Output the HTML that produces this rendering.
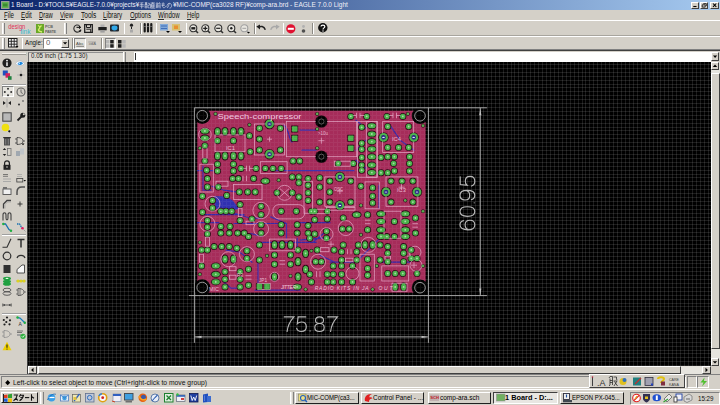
<!DOCTYPE html><html><head><meta charset="utf-8"><style>
*{margin:0;padding:0;box-sizing:border-box}
html,body{width:720px;height:405px;overflow:hidden;background:#d4d0c8;font-family:"Liberation Sans",sans-serif;position:relative}
.a{position:absolute}
.t{position:absolute;white-space:nowrap;transform-origin:0 0;color:#000}
.sk{border-top:1px solid #808080;border-left:1px solid #808080;border-bottom:1px solid #fff;border-right:1px solid #fff}
.rs{border-top:1px solid #fff;border-left:1px solid #fff;border-bottom:1px solid #404040;border-right:1px solid #404040;background:#d4d0c8}
svg{position:absolute;overflow:visible}
</style></head><body>
<div class="a" style="left:0px;top:0px;width:720px;height:10px;background:linear-gradient(90deg,#0a246a,#a6caf0);"></div>
<svg style="left:1px;top:1px" width="9" height="8" viewBox="0 0 9 8"><rect x="0.5" y="0.5" width="7.5" height="7" fill="#62b050" stroke="#9a9a9a"/><rect x="2" y="2.5" width="4.5" height="3" fill="#3c8c30"/></svg>
<div class="t" style="left:10.90px;top:1.27px;font-size:7.6px;line-height:7.6px;color:#f0f0f8;font-weight:normal;transform:scaleX(0.828);">1 Board - D:¥TOOLS¥EAGLE-7.0.0¥projects¥</div>
<svg style="left:139px;top:1.8px" width="34" height="7" viewBox="0 0 34 7"><g fill="none" stroke="#f0f0f8" stroke-width="0.9"><path transform="translate(0.0,0) scale(0.55,0.65)" d="M2 1.5L8 1M1.5 4H8.5M1 6.5H9M5 1.2V9.5L3.8 8.8"/><path transform="translate(5.5,0) scale(0.55,0.65)" d="M0.5 1H5M1 3H4.5V9H1ZM2.3 1V4.5M3.3 1V4.5M1 6.5H4.5M6 2H9V5H6.5V9H9.5"/><path transform="translate(11.0,0) scale(0.55,0.65)" d="M1 1.5H9M5 0.3V3M2.5 3H7.5V8H2.5ZM2.5 5H7.5M2.5 6.5H7.5M1 9.5H9.5M1 3V9.5"/><path transform="translate(16.5,0) scale(0.55,0.65)" d="M2.5 0.3L3.5 2M7.5 0.3L6.5 2M0.5 2.5H9.5M1.5 4H4.5V9.5M1.5 4V9.5M1.5 6H4.5M1.5 7.8H4.5M6.5 4V8M8.5 3.5V9.5L7.5 9"/><path transform="translate(22.0,0) scale(0.55,0.65)" d="M4 0.5L3 7C3 9.5 8 9.5 8.5 6.5M1 3H7M1 5.2H7"/><path transform="translate(27.5,0) scale(0.55,0.65)" d="M5 1.5C4 6 3 9 1.5 8.5C0 7.5 1 2 5 2C8 2 9.5 4 9.3 6C9 8.5 7 9.5 5.5 9.5"/></g></svg>
<div class="t" style="left:172.50px;top:1.27px;font-size:7.6px;line-height:7.6px;color:#f0f0f8;font-weight:normal;transform:scaleX(0.854);">¥MIC-COMP(ca3028 RF)¥comp-ara.brd - EAGLE 7.0.0 Light</div>
<div class="a rs" style="left:690.8px;top:1.5px;width:8.3px;height:7px"></div>
<div class="a rs" style="left:700px;top:1.5px;width:8.3px;height:7px"></div>
<div class="a rs" style="left:710.3px;top:1.5px;width:8.3px;height:7px"></div>
<svg style="left:690.8px;top:1.5px" width="28" height="7" viewBox="0 0 28 7"><path d="M2.3 4.5H5.5" stroke="#000" stroke-width="1.1"/><path d="M12.3 1.6h3v2.4M11.2 2.8h3v2.3h-3z" stroke="#000" stroke-width="0.75" fill="none"/><path d="M22 1.5L25.3 4.8M25.3 1.5L22 4.8" stroke="#000" stroke-width="1.05"/></svg>
<div class="a" style="left:0px;top:10px;width:720px;height:9.5px;background:#d4d0c8;"></div>
<div class="t" style="left:3.60px;top:11.09px;font-size:8.4px;line-height:8.4px;color:#101010;font-weight:normal;transform:scaleX(0.739);">File</div>
<div class="a" style="left:3.6px;top:18.7px;width:3.6px;height:0.7px;background:#303030;"></div>
<div class="t" style="left:21.00px;top:11.09px;font-size:8.4px;line-height:8.4px;color:#101010;font-weight:normal;transform:scaleX(0.746);">Edit</div>
<div class="a" style="left:21px;top:18.7px;width:3.8px;height:0.7px;background:#303030;"></div>
<div class="t" style="left:39.00px;top:11.09px;font-size:8.4px;line-height:8.4px;color:#101010;font-weight:normal;transform:scaleX(0.704);">Draw</div>
<div class="a" style="left:39px;top:18.7px;width:4.2px;height:0.7px;background:#303030;"></div>
<div class="t" style="left:60.40px;top:11.09px;font-size:8.4px;line-height:8.4px;color:#101010;font-weight:normal;transform:scaleX(0.731);">View</div>
<div class="a" style="left:60.4px;top:18.7px;width:4.4px;height:0.7px;background:#303030;"></div>
<div class="t" style="left:80.50px;top:11.09px;font-size:8.4px;line-height:8.4px;color:#101010;font-weight:normal;transform:scaleX(0.780);">Tools</div>
<div class="a" style="left:80.5px;top:18.7px;width:3.8px;height:0.7px;background:#303030;"></div>
<div class="t" style="left:103.30px;top:11.09px;font-size:8.4px;line-height:8.4px;color:#101010;font-weight:normal;transform:scaleX(0.748);">Library</div>
<div class="a" style="left:103.3px;top:18.7px;width:3.4px;height:0.7px;background:#303030;"></div>
<div class="t" style="left:130.00px;top:11.09px;font-size:8.4px;line-height:8.4px;color:#101010;font-weight:normal;transform:scaleX(0.725);">Options</div>
<div class="a" style="left:130px;top:18.7px;width:4.6px;height:0.7px;background:#303030;"></div>
<div class="t" style="left:158.30px;top:11.09px;font-size:8.4px;line-height:8.4px;color:#101010;font-weight:normal;transform:scaleX(0.726);">Window</div>
<div class="a" style="left:158.3px;top:18.7px;width:5.8px;height:0.7px;background:#303030;"></div>
<div class="t" style="left:186.70px;top:11.09px;font-size:8.4px;line-height:8.4px;color:#101010;font-weight:normal;transform:scaleX(0.712);">Help</div>
<div class="a" style="left:186.7px;top:18.7px;width:4.2px;height:0.7px;background:#303030;"></div>
<div class="a" style="left:0px;top:19.5px;width:720px;height:0.8px;background:#a8a59e;"></div>
<div class="a" style="left:0px;top:20.3px;width:720px;height:0.8px;background:#fff;"></div>
<div class="a" style="left:0px;top:34.8px;width:720px;height:0.8px;background:#a8a59e;"></div>
<div class="a" style="left:0px;top:35.6px;width:720px;height:0.8px;background:#fff;"></div>
<div class="a" style="left:2px;top:22.5px;width:1px;height:11px;background:#fff;"></div>
<div class="a" style="left:3px;top:22.5px;width:1.2px;height:11px;background:#e8e6e2;"></div>
<div class="a" style="left:4.2px;top:22.5px;width:1px;height:11px;background:#808080;"></div>
<div class="a" style="left:64px;top:22.5px;width:1px;height:11px;background:#fff;"></div>
<div class="a" style="left:65px;top:22.5px;width:1.2px;height:11px;background:#e8e6e2;"></div>
<div class="a" style="left:66.2px;top:22.5px;width:1px;height:11px;background:#808080;"></div>
<div class="a" style="left:2px;top:37.5px;width:1px;height:11.5px;background:#fff;"></div>
<div class="a" style="left:3px;top:37.5px;width:1.2px;height:11.5px;background:#e8e6e2;"></div>
<div class="a" style="left:4.2px;top:37.5px;width:1px;height:11.5px;background:#808080;"></div>
<div class="a" style="left:123.5px;top:22.5px;width:0.8px;height:11px;background:#8c8a84;"></div>
<div class="a" style="left:124.3px;top:22.5px;width:0.8px;height:11px;background:#fff;"></div>
<div class="a" style="left:140px;top:22.5px;width:0.8px;height:11px;background:#8c8a84;"></div>
<div class="a" style="left:140.8px;top:22.5px;width:0.8px;height:11px;background:#fff;"></div>
<div class="a" style="left:155.6px;top:22.5px;width:0.8px;height:11px;background:#8c8a84;"></div>
<div class="a" style="left:156.4px;top:22.5px;width:0.8px;height:11px;background:#fff;"></div>
<div class="a" style="left:185.6px;top:22.5px;width:0.8px;height:11px;background:#8c8a84;"></div>
<div class="a" style="left:186.4px;top:22.5px;width:0.8px;height:11px;background:#fff;"></div>
<div class="a" style="left:254px;top:22.5px;width:0.8px;height:11px;background:#8c8a84;"></div>
<div class="a" style="left:254.8px;top:22.5px;width:0.8px;height:11px;background:#fff;"></div>
<div class="a" style="left:282.5px;top:22.5px;width:0.8px;height:11px;background:#8c8a84;"></div>
<div class="a" style="left:283.3px;top:22.5px;width:0.8px;height:11px;background:#fff;"></div>
<div class="a" style="left:311.7px;top:22.5px;width:0.8px;height:11px;background:#8c8a84;"></div>
<div class="a" style="left:312.5px;top:22.5px;width:0.8px;height:11px;background:#fff;"></div>
<svg style="left:8px;top:22.5px" width="24" height="12" viewBox="0 0 24 12"><text x="0.3" y="5.8" font-family="Liberation Sans" font-size="6.8" fill="#e03058" textLength="17" lengthAdjust="spacingAndGlyphs">design</text><text x="12.5" y="10.6" font-family="Liberation Sans" font-size="6.5" fill="#38b8d0" textLength="10" lengthAdjust="spacingAndGlyphs">link</text></svg>
<svg style="left:36px;top:24px" width="21" height="10" viewBox="0 0 21 10"><rect x="0" y="0" width="8" height="9" fill="#6aa828"/><path d="M2 1.5Q5 3 3 5T6 8M5.5 1.5L3.5 3.5" stroke="#d8f070" stroke-width="1.3" fill="none"/><text x="9" y="4" font-family="Liberation Sans" font-size="3.8" font-weight="bold" fill="#606060">PCB</text><text x="9" y="8.8" font-family="Liberation Sans" font-size="3.8" font-weight="bold" fill="#606060" textLength="11">PASTE</text></svg>
<svg style="left:72.5px;top:23.5px" width="9" height="9" viewBox="0 0 9 9"><path d="M6.5 1.6A3.6 3.6 0 1 0 7.9 5.5" stroke="#303030" stroke-width="1.1" fill="none"/><path d="M3.5 3.3H7.5M6 2L7.6 3.3L6 4.6" stroke="#000" stroke-width="1" fill="none"/><path d="M5.5 6.5h3l-1.5 1.6z" fill="#000"/></svg>
<svg style="left:84.4px;top:23.5px" width="9" height="9" viewBox="0 0 9 9"><path d="M0.7 0.7H8.3V8.3H0.7Z" fill="none" stroke="#202020" stroke-width="1.3"/><path d="M2.5 0.7V3.5H6.5V0.7M2.3 5.2H6.7V8.3" fill="none" stroke="#202020" stroke-width="1"/></svg>
<svg style="left:97.5px;top:23.5px" width="9" height="9" viewBox="0 0 9 9"><rect x="2.5" y="0.5" width="4" height="2.5" fill="#b0b0b0"/><rect x="0.3" y="3" width="8.4" height="3.3" fill="#202020"/><rect x="2.3" y="6.3" width="4.4" height="2.3" fill="#a0a0a0"/></svg>
<svg style="left:110px;top:24px" width="9" height="8" viewBox="0 0 9 8"><rect x="0" y="0.5" width="9" height="7" rx="1" fill="#202830"/><ellipse cx="4.5" cy="4" rx="3" ry="2.4" fill="#30a8e8"/></svg>
<svg style="left:128.75px;top:23px" width="5" height="10" viewBox="0 0 5 10"><circle cx="2.5" cy="2.2" r="1.6" fill="#202020"/><path d="M2.5 4V6" stroke="#202020" stroke-width="1"/><rect x="1" y="6.5" width="3" height="3" fill="#a8a8a8"/></svg>
<svg style="left:142.5px;top:23px" width="10" height="9.5" viewBox="0 0 10 9.5"><path d="M1.7 1V8.5M5 1V8.5M8.3 1V8.5" stroke="#181818" stroke-width="2.2" stroke-linecap="round"/><path d="M0.5 3.5H2.9M3.8 3.5H6.2M7.1 3.5H9.5" stroke="#909090" stroke-width="0.6"/></svg>
<svg style="left:160px;top:24px" width="10" height="9" viewBox="0 0 10 9"><rect x="0" y="0" width="8" height="6.5" fill="#80a8d8"/><path d="M1 2H7M1 4.5H7" stroke="#3060b0" stroke-width="0.8"/><path d="M6 7h4l-2 2z" fill="#000"/></svg>
<svg style="left:172px;top:24px" width="10" height="9" viewBox="0 0 10 9"><rect x="0" y="0" width="8" height="6.5" fill="#d8c070"/><rect x="2" y="1.5" width="4" height="3.5" fill="#e89030"/><path d="M6 7h4l-2 2z" fill="#000"/></svg>
<svg style="left:188.75px;top:23.5px" width="10" height="10" viewBox="0 0 10 10"><circle cx="4.3" cy="4.3" r="3.5" fill="#e8e6e0" stroke="#303030" stroke-width="1.1"/><path d="M6.8 6.8L9 9" stroke="#303030" stroke-width="1.6"/><rect x="2.3" y="3.1" width="4" height="2.4" fill="#202020"/></svg>
<svg style="left:201px;top:23.5px" width="10" height="10" viewBox="0 0 10 10"><circle cx="4.3" cy="4.3" r="3.5" fill="#e8e6e0" stroke="#303030" stroke-width="1.1"/><path d="M6.8 6.8L9 9" stroke="#303030" stroke-width="1.6"/><path d="M2.2 4.3H6.4M4.3 2.2V6.4" stroke="#202020" stroke-width="1.2"/></svg>
<svg style="left:214px;top:23.5px" width="10" height="10" viewBox="0 0 10 10"><circle cx="4.3" cy="4.3" r="3.5" fill="#e8e6e0" stroke="#303030" stroke-width="1.1"/><path d="M6.8 6.8L9 9" stroke="#303030" stroke-width="1.6"/><path d="M2.2 4.3H6.4" stroke="#202020" stroke-width="1.2"/></svg>
<svg style="left:226.7px;top:23.5px" width="10" height="10" viewBox="0 0 10 10"><circle cx="4.3" cy="4.3" r="3.5" fill="#e8e6e0" stroke="#303030" stroke-width="1.1"/><path d="M6.8 6.8L9 9" stroke="#303030" stroke-width="1.6"/><circle cx="4.3" cy="4.3" r="1.2" fill="#202020"/></svg>
<svg style="left:240px;top:23.5px" width="10" height="10" viewBox="0 0 10 10"><circle cx="4.3" cy="4.3" r="3.5" fill="#e8e6e0" stroke="#a0a0a0" stroke-width="1.1"/><path d="M6.8 6.8L9 9" stroke="#a0a0a0" stroke-width="1.6"/><path d="M2.4 4.3H6.2" stroke="#a0a0a0" stroke-width="1"/><path d="M7 8h3l-1.5 1.6z" fill="#000"/></svg>
<svg style="left:256px;top:24px" width="10" height="8" viewBox="0 0 10 8"><path d="M2.5 3.5C4.5 1.8 8 2 9.3 5.8" stroke="#202020" stroke-width="1.5" fill="none"/><path d="M0.3 2.5L4 0.5L4 5.5Z" fill="#202020"/></svg>
<svg style="left:270px;top:24px" width="10" height="8" viewBox="0 0 10 8"><path d="M7.5 3.5C5.5 1.8 2 2 0.7 5.8" stroke="#a8a8a8" stroke-width="1.5" fill="none"/><path d="M9.7 2.5L6 0.5L6 5.5Z" fill="#a8a8a8"/></svg>
<svg style="left:286px;top:23.5px" width="10" height="10" viewBox="0 0 10 10"><circle cx="4.8" cy="4.8" r="4.6" fill="#e01030"/><rect x="1.8" y="3.8" width="6" height="2" fill="#fff"/></svg>
<svg style="left:301px;top:23.5px" width="5" height="10" viewBox="0 0 5 10"><circle cx="2.5" cy="2.5" r="1.4" fill="#b0b0b0"/><circle cx="2.5" cy="7" r="1.8" fill="#505050"/></svg>
<svg style="left:318px;top:23.3px" width="10" height="10" viewBox="0 0 10 10"><circle cx="4.8" cy="4.8" r="4.7" fill="#101010"/><path d="M3 3.6C3 1.6 6.8 1.6 6.8 3.6C6.8 5 5 4.8 5 6.5" stroke="#fff" stroke-width="1.2" fill="none"/><circle cx="5" cy="8" r="0.7" fill="#fff"/></svg>
<div class="a" style="left:0px;top:49.4px;width:720px;height:0.9px;background:#808080;"></div>
<div class="a" style="left:0px;top:50.3px;width:720px;height:0.9px;background:#404040;"></div>
<svg style="left:8px;top:38.3px" width="10.5" height="10" viewBox="0 0 10.5 10"><rect x="0.5" y="0.5" width="8.5" height="8.5" fill="#f0f0f0" stroke="#202020" stroke-width="1"/><path d="M3.3 0.5V9M6.2 0.5V9M0.5 3.3H9M0.5 6.2H9" stroke="#202020" stroke-width="0.9"/><path d="M7.5 8h3l-1.5 1.8z" fill="#000"/></svg>
<div class="a" style="left:21.6px;top:37.5px;width:0.8px;height:11px;background:#8c8a84;"></div>
<div class="a" style="left:22.400000000000002px;top:37.5px;width:0.8px;height:11px;background:#fff;"></div>
<div class="t" style="left:25.00px;top:39.43px;font-size:8px;line-height:8px;color:#101010;font-weight:normal;transform:scaleX(0.776);">Angle:</div>
<div class="a sk" style="left:43px;top:38px;width:26.4px;height:10.5px;background:#fff;border-top-color:#808080;border-left-color:#808080"></div>
<div class="t" style="left:45.50px;top:39.43px;font-size:8px;line-height:8px;color:#606060;font-weight:normal;transform:scaleX(0.966);">0</div>
<div class="a rs" style="left:60.5px;top:39px;width:8px;height:8.5px"></div>
<svg style="left:60.5px;top:39px" width="8" height="8.5" viewBox="0 0 8 8.5"><path d="M2 3.2h4.2l-2.1 2.4z" fill="#000"/></svg>
<div class="a" style="left:72px;top:37.5px;width:0.8px;height:11px;background:#8c8a84;"></div>
<div class="a" style="left:72.8px;top:37.5px;width:0.8px;height:11px;background:#fff;"></div>
<div class="a" style="left:74.4px;top:38px;width:11.2px;height:10.5px;background:#e6e4de;border-top:1px solid #808080;border-left:1px solid #808080;border-bottom:1px solid #fff;border-right:1px solid #fff"></div>
<svg style="left:76px;top:40.5px" width="9" height="6" viewBox="0 0 9 6"><text x="0" y="4.2" font-family="Liberation Sans" font-size="4.2" fill="#404040" textLength="7.5">Abc</text><path d="M0.3 5.3H8" stroke="#505050" stroke-width="0.7"/></svg>
<svg style="left:88px;top:40.5px" width="9" height="6" viewBox="0 0 9 6"><text x="0" y="4.2" font-family="Liberation Sans" font-size="4.2" fill="#606060" textLength="7.5" transform="scale(-1,1) translate(-8,0)">Abc</text><path d="M0.3 1H8" stroke="#909090" stroke-width="0.7"/></svg>
<div class="a" style="left:101px;top:37.5px;width:0.8px;height:11px;background:#8c8a84;"></div>
<div class="a" style="left:101.8px;top:37.5px;width:0.8px;height:11px;background:#fff;"></div>
<div class="a" style="left:104.5px;top:38px;width:11px;height:10.5px;background:#e6e4de;border-top:1px solid #808080;border-left:1px solid #808080;border-bottom:1px solid #fff;border-right:1px solid #fff"></div>
<svg style="left:106px;top:39.5px" width="8" height="8" viewBox="0 0 8 8"><rect x="0" y="0" width="3.5" height="3.5" fill="#b8b8b8"/><rect x="4.2" y="0" width="3.5" height="3.5" fill="#202020"/><rect x="0" y="4.2" width="3.5" height="3.5" fill="#b8b8b8"/><rect x="4.2" y="4.2" width="3.5" height="3.5" fill="#202020"/></svg>
<svg style="left:117.5px;top:39.5px" width="8" height="8" viewBox="0 0 8 8"><rect x="0" y="0" width="3.5" height="3.5" fill="#202020"/><rect x="4.2" y="0" width="3.5" height="3.5" fill="#b8b8b8"/><rect x="0" y="4.2" width="3.5" height="3.5" fill="#202020"/><rect x="4.2" y="4.2" width="3.5" height="3.5" fill="#b8b8b8"/></svg>
<div class="a" style="left:2.2px;top:52.5px;width:23.8px;height:0.9px;background:#9c9a94;"></div>
<div class="a" style="left:2.2px;top:53.4px;width:23.8px;height:0.9px;background:#f4f2ee;"></div>
<div class="a" style="left:2.2px;top:54.3px;width:23.8px;height:0.9px;background:#9c9a94;"></div>
<div class="a" style="left:25.5px;top:52px;width:1px;height:3.5px;background:#c0c8c0;"></div>
<div class="a" style="left:28px;top:51.5px;width:95.5px;height:10.5px;background:#dcd9d2;border-left:1px solid #707070;border-top:1px solid #909090"></div>
<div class="t" style="left:30.80px;top:52.21px;font-size:7.9px;line-height:7.9px;color:#202020;font-weight:normal;transform:scaleX(0.780);">0.05 inch (1.75 1.30)</div>
<div class="a" style="left:123.3px;top:51.5px;width:1px;height:10.5px;background:#fff;"></div>
<div class="a" style="left:125px;top:51.5px;width:8.5px;height:10.5px;background:#d4d0c8;border-left:1px solid #808080"></div>
<div class="a" style="left:133.6px;top:51.5px;width:577.4px;height:10.5px;background:#fff;"></div>
<div class="a" style="left:134.8px;top:53.3px;width:0.9px;height:6.5px;background:#303030;"></div>
<div class="a rs" style="left:711px;top:51.7px;width:8px;height:9px"></div>
<svg style="left:711px;top:51.7px" width="8" height="9" viewBox="0 0 8 9"><path d="M2 3.6h4.2l-2.1 2.4z" fill="#000"/></svg>
<div class="a" style="left:26.8px;top:61.5px;width:1.2px;height:313px;background:#404040;"></div>
<svg style="left:2.4000000000000004px;top:58.3px" width="10" height="10" viewBox="0 0 10 10"><circle cx="5" cy="5" r="4.6" fill="#202020"/><circle cx="5" cy="2.6" r="0.9" fill="#fff"/><path d="M5 4.2V8" stroke="#fff" stroke-width="1.4"/></svg>
<svg style="left:15.3px;top:58.0px" width="10" height="10" viewBox="0 0 10 10"><path d="M0.5 5.5C2.5 2 7.5 2 9.5 5.5C7.5 8.5 2.5 8.5 0.5 5.5Z" fill="#f4f8fc" stroke="#b0b8c0" stroke-width="0.7"/><path d="M2.5 6C3.5 3.8 6.8 3.5 8 5.2C7 7.2 4 7.6 2.5 6Z" fill="#1a88e0"/><circle cx="4.3" cy="5.3" r="0.7" fill="#d8f0ff"/></svg>
<svg style="left:2.4000000000000004px;top:70.2px" width="10" height="10" viewBox="0 0 10 10"><rect x="0.8" y="0.5" width="5" height="5" fill="#2050c0"/><rect x="3.5" y="3.2" width="4.5" height="4.5" fill="#d02060"/><rect x="6" y="6.2" width="3.6" height="3.6" fill="#208040"/></svg>
<svg style="left:15.7px;top:70.2px" width="10" height="10" viewBox="0 0 10 10"><path d="M5 0.5V9.5M1 5H9" stroke="#b0b0b0" stroke-width="0.8"/><circle cx="5" cy="5" r="1.3" fill="#202020"/></svg>
<div class="a" style="left:2px;top:84.2px;width:24px;height:0.8px;background:#a0a0a0;"></div>
<div class="a" style="left:2px;top:85px;width:24px;height:0.8px;background:#fff;"></div>
<div class="a" style="left:2px;top:86.3px;width:12px;height:11.2px;background:#e6e4de;border-top:1px solid #808080;border-left:1px solid #808080;border-bottom:1px solid #fff;border-right:1px solid #fff"></div>
<svg style="left:3.0px;top:87.0px" width="10" height="10" viewBox="0 0 10 10"><circle cx="5" cy="1.8" r="1" fill="#303030"/><circle cx="5" cy="8.2" r="1" fill="#303030"/><circle cx="1.8" cy="5" r="1" fill="#303030"/><circle cx="8.2" cy="5" r="1" fill="#303030"/></svg>
<svg style="left:15.7px;top:86.5px" width="10" height="10" viewBox="0 0 10 10"><circle cx="5" cy="5" r="4" fill="none" stroke="#606060" stroke-width="1.1"/><path d="M5 2.5V5.5L6.8 6.5" stroke="#606060" stroke-width="0.9" fill="none"/></svg>
<svg style="left:2.4000000000000004px;top:98.3px" width="10" height="10" viewBox="0 0 10 10"><path d="M5 0.5V9.5" stroke="#909090" stroke-width="0.7"/><path d="M1 3L3.8 5L1 7Z M9 3L6.2 5L9 7Z" fill="#202020"/></svg>
<svg style="left:15.7px;top:98.3px" width="10" height="10" viewBox="0 0 10 10"><circle cx="3" cy="6.5" r="1" fill="#303030"/><circle cx="7" cy="3" r="0.9" fill="#707070"/></svg>
<svg style="left:1.9000000000000004px;top:111.8px" width="10" height="10" viewBox="0 0 10 10"><rect x="0.8" y="0.8" width="8.4" height="8.4" fill="#b8b8b8" stroke="#404040" stroke-width="1"/></svg>
<svg style="left:15.7px;top:111.8px" width="10" height="10" viewBox="0 0 10 10"><path d="M1.5 8.5L6 4" stroke="#202020" stroke-width="1.8"/><circle cx="6.8" cy="3.2" r="2.5" fill="#202020"/><circle cx="7.8" cy="2.2" r="1" fill="#d4d0c8"/></svg>
<svg style="left:1.0px;top:122.8px" width="10" height="10" viewBox="0 0 10 10"><circle cx="4.5" cy="4.5" r="3.8" fill="#f0e010"/><circle cx="8.3" cy="8.3" r="1.1" fill="#101010"/></svg>
<svg style="left:2.0px;top:135.5px" width="10" height="10" viewBox="0 0 10 10"><rect x="2" y="2" width="6" height="7.5" fill="#505050"/><rect x="1.2" y="1" width="7.6" height="1.2" fill="#303030"/><path d="M3.7 3V8.5M6.3 3V8.5" stroke="#a0a0a0" stroke-width="0.6"/></svg>
<svg style="left:15.3px;top:135.5px" width="10" height="10" viewBox="0 0 10 10"><path d="M2 1.5V8.5M2 1.5C6 1.5 8 3 8 5C8 7 6 8.5 2 8.5" stroke="#404040" stroke-width="0.9" fill="none"/><path d="M0 3H2M0 7H2M8 5H10" stroke="#404040" stroke-width="0.8"/><path d="M6.5 7.5h3l-1.5 1.8z" fill="#000"/></svg>
<svg style="left:2.0px;top:147.4px" width="10" height="10" viewBox="0 0 10 10"><path d="M2.5 1L0.8 3H4.2Z M2.5 9L0.8 7H4.2Z" fill="#202020"/><rect x="5.5" y="1.5" width="3.5" height="7" fill="none" stroke="#707070" stroke-width="0.8"/></svg>
<svg style="left:15.3px;top:147.4px" width="10" height="10" viewBox="0 0 10 10"><rect x="1" y="4" width="4" height="5" fill="#a0a8b0"/><rect x="5" y="1.5" width="4" height="6" fill="#c0c4c8"/></svg>
<svg style="left:2.0px;top:160.2px" width="10" height="10" viewBox="0 0 10 10"><path d="M2.6 5V3.3C2.6 1.7 3.6 0.9 5 0.9C6.4 0.9 7.4 1.7 7.4 3.3V5" stroke="#202020" stroke-width="1.2" fill="none"/><rect x="1.5" y="4.8" width="7" height="5" fill="#202020"/><circle cx="5" cy="7" r="0.8" fill="#d4d0c8"/></svg>
<svg style="left:2.0px;top:172.5px" width="10" height="10" viewBox="0 0 10 10"><path d="M1 1.5H6M1 3.3H6" stroke="#505050" stroke-width="0.7"/><path d="M1 6H9M1 8.5H9" stroke="#a0a0a0" stroke-width="0.8"/></svg>
<svg style="left:15.5px;top:172.5px" width="10" height="10" viewBox="0 0 10 10"><path d="M1 1.5H6M1 3.5H6" stroke="#a0a0a0" stroke-width="0.7"/><rect x="0.8" y="5.5" width="6" height="3.5" fill="none" stroke="#404040" stroke-width="0.8"/><path d="M7.5 7h2.5l-1.2 1.6z" fill="#000"/></svg>
<svg style="left:2.0px;top:185.75px" width="10" height="10" viewBox="0 0 10 10"><rect x="1" y="3" width="8" height="5.5" fill="#f0f0f0" stroke="#505050" stroke-width="0.9"/><rect x="1" y="1" width="4" height="2" fill="#707070"/></svg>
<svg style="left:15.5px;top:185.75px" width="10" height="10" viewBox="0 0 10 10"><path d="M1 9V6C1 3 3 1 6 1H9" stroke="#505050" stroke-width="1.5" fill="none"/></svg>
<svg style="left:2.0px;top:198.6px" width="10" height="10" viewBox="0 0 10 10"><path d="M1.5 9.5V5L5 1.5H9" stroke="#404040" stroke-width="1.3" fill="none"/><path d="M3 9.5V5.5L5.5 3H9" stroke="#a0a0a0" stroke-width="0.7" fill="none"/></svg>
<svg style="left:15.0px;top:198.6px" width="10" height="10" viewBox="0 0 10 10"><path d="M2.5 5H7.5M5 2.5V7.5" stroke="#303030" stroke-width="0.9"/></svg>
<svg style="left:2.0px;top:210.5px" width="10" height="10" viewBox="0 0 10 10"><path d="M1 9.5V4C1 1 4 1 4 4V7C4 9.5 6 9.5 6 7V4C6 1 9 1 9 4V9.5" stroke="#404040" stroke-width="1.1" fill="none"/></svg>
<svg style="left:2.0px;top:222.3px" width="10" height="10" viewBox="0 0 10 10"><path d="M1 2H3.5L7 7.5L9.5 9" stroke="#1870b0" stroke-width="1.3" fill="none"/><circle cx="1.3" cy="2" r="1.2" fill="#20b040"/><circle cx="9" cy="8.8" r="1.2" fill="#20b040"/></svg>
<svg style="left:15.5px;top:222.3px" width="10" height="10" viewBox="0 0 10 10"><path d="M1 2H3.5L6 6" stroke="#1870b0" stroke-width="1.3" fill="none" stroke-dasharray="1.5 0.7"/><circle cx="6.5" cy="6.3" r="1.3" fill="#e02060"/><path d="M7.5 7.5L9.5 9.5" stroke="#a0a0a0" stroke-width="1"/></svg>
<div class="a" style="left:2px;top:234px;width:24px;height:0.8px;background:#a0a0a0;"></div>
<div class="a" style="left:2px;top:234.8px;width:24px;height:0.8px;background:#fff;"></div>
<svg style="left:2.0px;top:238.0px" width="10" height="10" viewBox="0 0 10 10"><path d="M0.5 9.2H5L9 0.8" stroke="#303030" stroke-width="1.1" fill="none"/></svg>
<svg style="left:15.5px;top:238.0px" width="10" height="10" viewBox="0 0 10 10"><path d="M1.5 1.5H8.5M5 1.5V9.5" stroke="#303030" stroke-width="1.5" fill="none"/></svg>
<svg style="left:2.0px;top:250.8px" width="10" height="10" viewBox="0 0 10 10"><circle cx="5" cy="5" r="3.8" fill="none" stroke="#303030" stroke-width="1.2"/></svg>
<svg style="left:15.5px;top:250.8px" width="10" height="10" viewBox="0 0 10 10"><path d="M1 7C2 3.5 8 3.5 9 7" stroke="#303030" stroke-width="1.2" fill="none"/></svg>
<svg style="left:2.0px;top:263.6px" width="10" height="10" viewBox="0 0 10 10"><rect x="1.5" y="1" width="7" height="8" fill="#303030"/></svg>
<svg style="left:15.5px;top:263.6px" width="10" height="10" viewBox="0 0 10 10"><path d="M1 9H8.5V1H6L1 5.5Z" fill="#f8f8f8" stroke="#404040" stroke-width="0.9"/></svg>
<svg style="left:2.0px;top:275.5px" width="10" height="10" viewBox="0 0 10 10"><ellipse cx="5" cy="2.6" rx="4" ry="1.8" fill="#20a040"/><ellipse cx="5" cy="5.5" rx="4" ry="1.8" fill="#20a040"/><ellipse cx="5" cy="8" rx="4" ry="1.8" fill="#20a040"/><ellipse cx="5" cy="2.4" rx="1.5" ry="0.7" fill="#e0ffe0"/></svg>
<svg style="left:15.5px;top:275.5px" width="10" height="10" viewBox="0 0 10 10"><path d="M0.5 5H9.5" stroke="#60b040" stroke-width="1"/><circle cx="2" cy="5" r="1.5" fill="#e0d020"/><circle cx="5" cy="5" r="1.5" fill="#e0d020"/><circle cx="8" cy="5" r="1.5" fill="#e0d020"/></svg>
<svg style="left:2.0px;top:287.4px" width="10" height="10" viewBox="0 0 10 10"><ellipse cx="5" cy="3" rx="4" ry="1.8" fill="none" stroke="#505050" stroke-width="0.9"/><ellipse cx="5" cy="6.5" rx="4" ry="1.8" fill="none" stroke="#505050" stroke-width="0.9"/></svg>
<svg style="left:15.5px;top:287.4px" width="10" height="10" viewBox="0 0 10 10"><path d="M2 1.5V8.5M2 1.5C6 1.5 8 3 8 5C8 7 6 8.5 2 8.5" stroke="#505050" stroke-width="0.9" fill="none"/><path d="M0 3H2M0 7H2M8 5H10M4 1V9" stroke="#505050" stroke-width="0.7"/></svg>
<svg style="left:2.0px;top:300.0px" width="10" height="10" viewBox="0 0 10 10"><path d="M0.8 3.5V6.5M9.2 3.5V6.5M1 5H9" stroke="#404040" stroke-width="0.8"/><path d="M1 5L3 4V6Z M9 5L7 4V6Z" fill="#404040"/></svg>
<div class="a" style="left:2px;top:312.8px;width:24px;height:0.8px;background:#a0a0a0;"></div>
<div class="a" style="left:2px;top:313.6px;width:24px;height:0.8px;background:#fff;"></div>
<svg style="left:2.0px;top:315.75px" width="10" height="10" viewBox="0 0 10 10"><circle cx="5" cy="1.5" r="1.1" fill="#202020"/><circle cx="1.8" cy="4" r="1.1" fill="#202020"/><circle cx="8" cy="4.3" r="1.1" fill="#202020"/><circle cx="4.3" cy="6" r="1.1" fill="#202020"/><circle cx="2.5" cy="8.5" r="1.1" fill="#202020"/><circle cx="7.5" cy="8.3" r="1.1" fill="#202020"/></svg>
<svg style="left:15.5px;top:315.75px" width="10" height="10" viewBox="0 0 10 10"><path d="M1.5 1.5L4 2L8.5 6.5" stroke="#1880c0" stroke-width="1.3" fill="none"/><circle cx="1.5" cy="1.5" r="1.2" fill="#20b040"/><circle cx="8.8" cy="6.8" r="1.2" fill="#20b040"/><text x="2.5" y="9.8" font-family="Liberation Sans" font-size="5" fill="#303030">A</text></svg>
<svg style="left:2.0px;top:328.6px" width="10" height="10" viewBox="0 0 10 10"><path d="M2 1.5V8.5M2 1.5C6 1.5 8 3 8 5C8 7 6 8.5 2 8.5" stroke="#909090" stroke-width="0.9" fill="none"/><path d="M0 3H2M0 7H2M8 5H10" stroke="#909090" stroke-width="0.8"/></svg>
<svg style="left:15.5px;top:328.6px" width="10" height="10" viewBox="0 0 10 10"><path d="M1 2H7M1 3.5H6" stroke="#606060" stroke-width="0.8"/><rect x="1" y="5" width="4" height="2" fill="#a0a0a0"/><circle cx="7" cy="7.3" r="2.6" fill="#30b040"/><path d="M5.8 7.3L6.8 8.3L8.3 6.3" stroke="#fff" stroke-width="0.8" fill="none"/></svg>
<svg style="left:1.5px;top:341.4px" width="10" height="10" viewBox="0 0 10 10"><path d="M5 0.8L9.5 9.3H0.5Z" fill="#f0d000"/><path d="M5 3.5V6.8" stroke="#202020" stroke-width="1.1"/><circle cx="5" cy="8" r="0.6" fill="#202020"/></svg>
<svg style="left:28px;top:61.8px" width="683" height="304.5" viewBox="28 61.8 683 304.5"><defs><clipPath id="bc"><rect x="197" y="110" width="229" height="183"/></clipPath></defs><rect x="28" y="61.8" width="683" height="304.5" fill="#000"/><path d="M29.5 61.8V366.3M33.5 61.8V366.3M37.5 61.8V366.3M41.5 61.8V366.3M45.5 61.8V366.3M49.5 61.8V366.3M53.5 61.8V366.3M57.5 61.8V366.3M61.5 61.8V366.3M65.5 61.8V366.3M69.5 61.8V366.3M73.5 61.8V366.3M76.5 61.8V366.3M80.5 61.8V366.3M84.5 61.8V366.3M88.5 61.8V366.3M92.5 61.8V366.3M96.5 61.8V366.3M100.5 61.8V366.3M104.5 61.8V366.3M108.5 61.8V366.3M112.5 61.8V366.3M116.5 61.8V366.3M120.5 61.8V366.3M124.5 61.8V366.3M128.5 61.8V366.3M132.5 61.8V366.3M136.5 61.8V366.3M140.5 61.8V366.3M144.5 61.8V366.3M147.5 61.8V366.3M151.5 61.8V366.3M155.5 61.8V366.3M159.5 61.8V366.3M163.5 61.8V366.3M167.5 61.8V366.3M171.5 61.8V366.3M175.5 61.8V366.3M179.5 61.8V366.3M183.5 61.8V366.3M187.5 61.8V366.3M191.5 61.8V366.3M195.5 61.8V366.3M199.5 61.8V366.3M203.5 61.8V366.3M207.5 61.8V366.3M211.5 61.8V366.3M215.5 61.8V366.3M219.5 61.8V366.3M222.5 61.8V366.3M226.5 61.8V366.3M230.5 61.8V366.3M234.5 61.8V366.3M238.5 61.8V366.3M242.5 61.8V366.3M246.5 61.8V366.3M250.5 61.8V366.3M254.5 61.8V366.3M258.5 61.8V366.3M262.5 61.8V366.3M266.5 61.8V366.3M270.5 61.8V366.3M274.5 61.8V366.3M278.5 61.8V366.3M282.5 61.8V366.3M286.5 61.8V366.3M290.5 61.8V366.3M293.5 61.8V366.3M297.5 61.8V366.3M301.5 61.8V366.3M305.5 61.8V366.3M309.5 61.8V366.3M313.5 61.8V366.3M317.5 61.8V366.3M321.5 61.8V366.3M325.5 61.8V366.3M329.5 61.8V366.3M333.5 61.8V366.3M337.5 61.8V366.3M341.5 61.8V366.3M345.5 61.8V366.3M349.5 61.8V366.3M353.5 61.8V366.3M357.5 61.8V366.3M361.5 61.8V366.3M365.5 61.8V366.3M368.5 61.8V366.3M372.5 61.8V366.3M376.5 61.8V366.3M380.5 61.8V366.3M384.5 61.8V366.3M388.5 61.8V366.3M392.5 61.8V366.3M396.5 61.8V366.3M400.5 61.8V366.3M404.5 61.8V366.3M408.5 61.8V366.3M412.5 61.8V366.3M416.5 61.8V366.3M420.5 61.8V366.3M424.5 61.8V366.3M428.5 61.8V366.3M432.5 61.8V366.3M436.5 61.8V366.3M439.5 61.8V366.3M443.5 61.8V366.3M447.5 61.8V366.3M451.5 61.8V366.3M455.5 61.8V366.3M459.5 61.8V366.3M463.5 61.8V366.3M467.5 61.8V366.3M471.5 61.8V366.3M475.5 61.8V366.3M479.5 61.8V366.3M483.5 61.8V366.3M487.5 61.8V366.3M491.5 61.8V366.3M495.5 61.8V366.3M499.5 61.8V366.3M503.5 61.8V366.3M507.5 61.8V366.3M511.5 61.8V366.3M514.5 61.8V366.3M518.5 61.8V366.3M522.5 61.8V366.3M526.5 61.8V366.3M530.5 61.8V366.3M534.5 61.8V366.3M538.5 61.8V366.3M542.5 61.8V366.3M546.5 61.8V366.3M550.5 61.8V366.3M554.5 61.8V366.3M558.5 61.8V366.3M562.5 61.8V366.3M566.5 61.8V366.3M570.5 61.8V366.3M574.5 61.8V366.3M578.5 61.8V366.3M582.5 61.8V366.3M585.5 61.8V366.3M589.5 61.8V366.3M593.5 61.8V366.3M597.5 61.8V366.3M601.5 61.8V366.3M605.5 61.8V366.3M609.5 61.8V366.3M613.5 61.8V366.3M617.5 61.8V366.3M621.5 61.8V366.3M625.5 61.8V366.3M629.5 61.8V366.3M633.5 61.8V366.3M637.5 61.8V366.3M641.5 61.8V366.3M645.5 61.8V366.3M649.5 61.8V366.3M653.5 61.8V366.3M657.5 61.8V366.3M660.5 61.8V366.3M664.5 61.8V366.3M668.5 61.8V366.3M672.5 61.8V366.3M676.5 61.8V366.3M680.5 61.8V366.3M684.5 61.8V366.3M688.5 61.8V366.3M692.5 61.8V366.3M696.5 61.8V366.3M700.5 61.8V366.3M704.5 61.8V366.3M708.5 61.8V366.3" stroke="#fff" stroke-opacity="0.11" stroke-width="1" fill="none" shape-rendering="crispEdges"/><path d="M28 64.5H711M28 68.5H711M28 72.5H711M28 76.5H711M28 80.5H711M28 84.5H711M28 87.5H711M28 91.5H711M28 95.5H711M28 99.5H711M28 103.5H711M28 107.5H711M28 111.5H711M28 115.5H711M28 119.5H711M28 123.5H711M28 127.5H711M28 130.5H711M28 134.5H711M28 138.5H711M28 142.5H711M28 146.5H711M28 150.5H711M28 154.5H711M28 158.5H711M28 162.5H711M28 166.5H711M28 170.5H711M28 174.5H711M28 177.5H711M28 181.5H711M28 185.5H711M28 189.5H711M28 193.5H711M28 197.5H711M28 201.5H711M28 205.5H711M28 209.5H711M28 213.5H711M28 217.5H711M28 220.5H711M28 224.5H711M28 228.5H711M28 232.5H711M28 236.5H711M28 240.5H711M28 244.5H711M28 248.5H711M28 252.5H711M28 256.5H711M28 260.5H711M28 263.5H711M28 267.5H711M28 271.5H711M28 275.5H711M28 279.5H711M28 283.5H711M28 287.5H711M28 291.5H711M28 295.5H711M28 299.5H711M28 303.5H711M28 306.5H711M28 310.5H711M28 314.5H711M28 318.5H711M28 322.5H711M28 326.5H711M28 330.5H711M28 334.5H711M28 338.5H711M28 342.5H711M28 346.5H711M28 350.5H711M28 353.5H711M28 357.5H711M28 361.5H711M28 365.5H711" stroke="#fff" stroke-opacity="0.11" stroke-width="1" fill="none" shape-rendering="crispEdges"/><rect x="197.3" y="110.5" width="228.3" height="181.9" fill="#a62c5a"/><circle cx="202.2" cy="115.5" r="8.3" fill="#000"/><circle cx="420" cy="115.6" r="8.3" fill="#000"/><circle cx="202.2" cy="287.3" r="8.3" fill="#000"/><circle cx="420" cy="287.5" r="8.3" fill="#000"/><path d="M203 166V190H211M212 186L224 190L238 192M197.5 222.5H219M234 223.3H270.7L286.5 223.3V238M300 222.5H330M204 214.5H244M270.7 216.7L286.5 223.3M250.7 233.3L262 236M297.3 238V250M356 120L366 128M356 150L366 140M356 160L366 168M300 130L316 130M302 150L316 150M226 250L240 252L252 262M320 255L335 262M258.5 242.2H316M258 258V290M313 242L325 232M300 240L330 237M379 185V208M224 282L231 288L240 288M284 125C290 130 288 138 292 142M390 125L400 140L414 150M197.5 170.5H214M274 170.5H354M255 290H300M330 262H356M356 262L380 238M380 262L410 262M235 213L250 218H262" stroke="#3828a8" stroke-width="1.2" fill="none" stroke-linecap="round"/><path d="M214 196L226 196L233 200.5L239 208.5L232 210.5L221 210L215 208Z" fill="#3030b0"/><g fill="#2a0814"><ellipse cx="204.9" cy="130.8" rx="5" ry="3.5"/><ellipse cx="204.9" cy="137.8" rx="5" ry="3.5"/><circle cx="204.9" cy="145.6" r="3.5"/><circle cx="204.9" cy="160.7" r="3.5"/><circle cx="199.9" cy="148.0" r="2"/><circle cx="215.5" cy="113.7" r="2"/><ellipse cx="217.5" cy="131.3" rx="3.5" ry="4.6"/><ellipse cx="225.0" cy="131.3" rx="3.5" ry="4.6"/><ellipse cx="233.4" cy="131.3" rx="3.5" ry="4.6"/><ellipse cx="241.0" cy="131.3" rx="3.5" ry="4.6"/><ellipse cx="217.5" cy="155.7" rx="3.5" ry="4.6"/><ellipse cx="225.0" cy="155.7" rx="3.5" ry="4.6"/><ellipse cx="233.4" cy="155.7" rx="3.5" ry="4.6"/><ellipse cx="241.0" cy="155.7" rx="3.5" ry="4.6"/><circle cx="217.5" cy="140.6" r="3.5"/><circle cx="233.4" cy="140.6" r="3.5"/><circle cx="217.5" cy="164.0" r="3.5"/><circle cx="233.4" cy="164.0" r="3.5"/><circle cx="217.5" cy="170.8" r="3.5"/><circle cx="233.4" cy="170.8" r="3.5"/><circle cx="249.4" cy="124.6" r="2"/><circle cx="249.4" cy="135.5" r="3.5"/><circle cx="250.2" cy="151.5" r="3.5"/><circle cx="259.4" cy="128.0" r="3.5"/><circle cx="259.4" cy="138.9" r="3.5"/><circle cx="259.4" cy="149.8" r="3.5"/><circle cx="269.5" cy="123.8" r="5.2"/><circle cx="269.5" cy="154.0" r="5.2"/><circle cx="280.4" cy="128.0" r="3.5"/><circle cx="280.4" cy="149.8" r="3.5"/><rect x="291.2" y="125.30000000000001" width="7" height="7"/><rect x="291.2" y="134.5" width="7" height="7"/><circle cx="265.3" cy="168.2" r="3.5"/><circle cx="272.9" cy="168.2" r="3.5"/><circle cx="281.2" cy="168.2" r="3.5"/><circle cx="241.0" cy="168.2" r="3.5"/><circle cx="256.0" cy="168.2" r="3.5"/><circle cx="293.0" cy="160.7" r="3.5"/><circle cx="299.7" cy="160.7" r="3.5"/><circle cx="206.6" cy="170.0" r="3.5"/><circle cx="321.4" cy="121.3" r="6.3"/><circle cx="321.4" cy="156.5" r="6.3"/><circle cx="317.2" cy="113.7" r="2"/><circle cx="317.2" cy="128.8" r="2"/><circle cx="317.2" cy="148.0" r="2"/><circle cx="350.8" cy="116.2" r="3.5"/><circle cx="366.7" cy="116.2" r="3.5"/><ellipse cx="371.8" cy="125.5" rx="5" ry="3.5"/><ellipse cx="371.8" cy="133.8" rx="5" ry="3.5"/><ellipse cx="371.8" cy="141.4" rx="5" ry="3.5"/><ellipse cx="371.8" cy="148.9" rx="5" ry="3.5"/><ellipse cx="371.8" cy="156.5" rx="5" ry="3.5"/><ellipse cx="371.8" cy="164.9" rx="5" ry="3.5"/><ellipse cx="371.8" cy="172.4" rx="5" ry="3.5"/><circle cx="361.7" cy="127.1" r="3.5"/><circle cx="361.7" cy="143.0" r="3.5"/><circle cx="361.7" cy="149.0" r="3.5"/><circle cx="361.7" cy="157.3" r="3.5"/><circle cx="361.7" cy="164.9" r="3.5"/><circle cx="361.7" cy="170.0" r="3.5"/><rect x="347.3" y="134.5" width="7" height="7"/><rect x="347.3" y="144.5" width="7" height="7"/><circle cx="383.5" cy="137.2" r="5.2"/><circle cx="413.7" cy="137.2" r="5.2"/><circle cx="387.7" cy="126.3" r="3.5"/><circle cx="408.7" cy="126.3" r="3.5"/><circle cx="387.7" cy="147.3" r="3.5"/><circle cx="398.6" cy="147.3" r="3.5"/><circle cx="408.7" cy="147.3" r="3.5"/><circle cx="386.9" cy="116.2" r="3.5"/><circle cx="402.8" cy="116.2" r="3.5"/><circle cx="407.8" cy="113.7" r="2"/><circle cx="423.0" cy="125.5" r="2"/><circle cx="381.0" cy="157.3" r="3.5"/><circle cx="387.7" cy="156.5" r="3.5"/><circle cx="394.4" cy="156.5" r="3.5"/><circle cx="409.5" cy="156.5" r="3.5"/><circle cx="393.6" cy="163.2" r="3.5"/><circle cx="409.5" cy="163.2" r="3.5"/><circle cx="394.4" cy="170.8" r="3.5"/><circle cx="409.5" cy="170.8" r="3.5"/><circle cx="338.2" cy="163.2" r="3.5"/><circle cx="353.3" cy="163.2" r="3.5"/><circle cx="207.4" cy="178.4" r="3.5"/><circle cx="207.4" cy="186.8" r="3.5"/><circle cx="218.3" cy="186.8" r="3.5"/><circle cx="232.6" cy="178.4" r="3.5"/><circle cx="238.5" cy="178.4" r="3.5"/><circle cx="253.6" cy="178.4" r="3.5"/><ellipse cx="265.3" cy="180.9" rx="5" ry="3.5"/><circle cx="278.7" cy="180.0" r="2"/><circle cx="239.3" cy="191.8" r="3.5"/><circle cx="247.7" cy="191.8" r="3.5"/><circle cx="255.2" cy="191.8" r="3.5"/><circle cx="212.5" cy="200.2" r="3.5"/><circle cx="212.5" cy="207.8" r="3.5"/><circle cx="202.4" cy="196.0" r="3.5"/><circle cx="226.7" cy="195.2" r="3.5"/><circle cx="202.4" cy="212.0" r="3.5"/><circle cx="220.8" cy="211.1" r="3.5"/><circle cx="225.9" cy="211.1" r="3.5"/><circle cx="231.8" cy="211.1" r="3.5"/><circle cx="240.1" cy="204.4" r="3.5"/><circle cx="240.1" cy="220.3" r="3.5"/><circle cx="261.1" cy="206.0" r="3.5"/><circle cx="261.1" cy="214.5" r="3.5"/><circle cx="277.0" cy="192.6" r="3.5"/><circle cx="292.2" cy="192.6" r="3.5"/><circle cx="281.2" cy="211.1" r="3.5"/><circle cx="296.3" cy="211.1" r="3.5"/><circle cx="298.9" cy="176.7" r="3.5"/><circle cx="298.9" cy="182.6" r="3.5"/><circle cx="298.9" cy="196.8" r="3.5"/><circle cx="292.2" cy="176.7" r="3.5"/><circle cx="308.1" cy="178.4" r="3.5"/><circle cx="308.1" cy="185.1" r="3.5"/><circle cx="308.1" cy="192.6" r="3.5"/><circle cx="308.1" cy="200.2" r="3.5"/><circle cx="311.4" cy="211.1" r="3.5"/><circle cx="207.4" cy="220.3" r="3.5"/><circle cx="207.4" cy="227.0" r="3.5"/><circle cx="220.8" cy="226.2" r="3.5"/><circle cx="230.0" cy="226.2" r="3.5"/><circle cx="220.8" cy="232.9" r="3.5"/><circle cx="229.2" cy="232.9" r="3.5"/><circle cx="237.6" cy="232.9" r="3.5"/><circle cx="244.3" cy="232.9" r="3.5"/><circle cx="261.1" cy="224.5" r="3.5"/><circle cx="261.1" cy="232.9" r="3.5"/><circle cx="251.9" cy="218.7" r="3.5"/><circle cx="281.2" cy="224.5" r="3.5"/><circle cx="281.2" cy="232.9" r="3.5"/><circle cx="297.2" cy="224.5" r="3.5"/><circle cx="297.2" cy="232.9" r="3.5"/><circle cx="207.4" cy="233.8" r="3.5"/><circle cx="308.1" cy="225.4" r="3.5"/><circle cx="308.1" cy="232.9" r="3.5"/><circle cx="339.9" cy="176.7" r="5.2"/><circle cx="339.9" cy="205.2" r="5.2"/><circle cx="329.8" cy="180.9" r="3.5"/><circle cx="350.8" cy="180.9" r="3.5"/><circle cx="329.8" cy="191.8" r="3.5"/><circle cx="329.8" cy="201.9" r="3.5"/><circle cx="350.8" cy="201.9" r="3.5"/><circle cx="319.7" cy="177.6" r="3.5"/><circle cx="319.7" cy="186.8" r="3.5"/><circle cx="319.7" cy="201.9" r="3.5"/><circle cx="381.0" cy="172.5" r="3.5"/><circle cx="387.7" cy="172.5" r="3.5"/><circle cx="372.6" cy="187.6" r="3.5"/><circle cx="372.6" cy="196.0" r="3.5"/><circle cx="372.6" cy="202.7" r="3.5"/><circle cx="360.9" cy="186.0" r="3.5"/><circle cx="360.9" cy="205.2" r="2"/><circle cx="386.0" cy="191.8" r="5.2"/><circle cx="417.0" cy="191.8" r="5.2"/><circle cx="391.0" cy="180.9" r="3.5"/><circle cx="402.0" cy="180.9" r="3.5"/><circle cx="412.9" cy="180.9" r="3.5"/><circle cx="391.0" cy="201.9" r="3.5"/><circle cx="412.9" cy="201.9" r="3.5"/><circle cx="405.3" cy="200.2" r="2"/><circle cx="423.0" cy="211.1" r="2"/><circle cx="314.7" cy="211.1" r="3.5"/><circle cx="327.3" cy="211.1" r="3.5"/><ellipse cx="356.7" cy="214.5" rx="5" ry="3.5"/><circle cx="367.6" cy="214.5" r="3.5"/><circle cx="367.6" cy="229.6" r="3.5"/><ellipse cx="381.0" cy="213.6" rx="5" ry="3.5"/><ellipse cx="381.0" cy="221.2" rx="5" ry="3.5"/><ellipse cx="381.0" cy="229.6" rx="5" ry="3.5"/><ellipse cx="381.0" cy="236.3" rx="5" ry="3.5"/><ellipse cx="405.3" cy="213.6" rx="5" ry="3.5"/><ellipse cx="405.3" cy="221.2" rx="5" ry="3.5"/><ellipse cx="405.3" cy="229.6" rx="5" ry="3.5"/><ellipse cx="405.3" cy="236.3" rx="5" ry="3.5"/><circle cx="394.4" cy="221.2" r="3.5"/><circle cx="415.4" cy="217.8" r="3.5"/><circle cx="415.4" cy="232.9" r="3.5"/><circle cx="343.2" cy="217.8" r="3.5"/><circle cx="327.3" cy="218.7" r="3.5"/><circle cx="314.7" cy="219.5" r="3.5"/><circle cx="342.4" cy="228.7" r="3.5"/><circle cx="349.1" cy="228.7" r="3.5"/><circle cx="326.5" cy="231.0" r="3.5"/><circle cx="314.7" cy="233.8" r="3.5"/><circle cx="360.9" cy="234.6" r="2"/><circle cx="248.5" cy="236.4" r="3.5"/><circle cx="214.1" cy="246.4" r="3.5"/><circle cx="221.7" cy="246.4" r="3.5"/><circle cx="229.2" cy="246.4" r="3.5"/><circle cx="236.8" cy="248.0" r="3.5"/><circle cx="201.6" cy="249.8" r="3.5"/><circle cx="207.4" cy="249.8" r="3.5"/><circle cx="199.9" cy="242.2" r="2"/><circle cx="201.6" cy="265.7" r="3.5"/><circle cx="199.9" cy="274.1" r="2"/><ellipse cx="225.0" cy="259.0" rx="3.5" ry="4.6"/><ellipse cx="233.4" cy="259.0" rx="3.5" ry="4.6"/><circle cx="246.9" cy="250.6" r="3.5"/><circle cx="246.9" cy="258.2" r="3.5"/><circle cx="259.4" cy="244.7" r="3.5"/><circle cx="267.0" cy="255.6" r="2"/><circle cx="259.4" cy="259.8" r="3.5"/><ellipse cx="215.8" cy="265.7" rx="5" ry="3.5"/><ellipse cx="215.8" cy="274.1" rx="5" ry="3.5"/><ellipse cx="215.8" cy="281.7" rx="5" ry="3.5"/><circle cx="225.0" cy="271.6" r="3.5"/><circle cx="225.0" cy="279.1" r="3.5"/><circle cx="225.0" cy="286.7" r="3.5"/><circle cx="240.1" cy="271.6" r="3.5"/><circle cx="240.1" cy="279.1" r="3.5"/><circle cx="240.1" cy="286.7" r="3.5"/><circle cx="248.5" cy="269.1" r="3.5"/><circle cx="248.5" cy="285.0" r="3.5"/><rect x="255.89999999999998" y="282.9" width="7" height="7"/><rect x="263.5" y="282.9" width="7" height="7"/><ellipse cx="274.5" cy="244.7" rx="3.5" ry="4.6"/><ellipse cx="282.1" cy="244.7" rx="3.5" ry="4.6"/><ellipse cx="290.5" cy="244.7" rx="3.5" ry="4.6"/><circle cx="274.5" cy="254.8" r="3.5"/><circle cx="274.5" cy="264.0" r="3.5"/><circle cx="290.5" cy="254.8" r="3.5"/><circle cx="290.5" cy="264.0" r="3.5"/><ellipse cx="274.5" cy="276.6" rx="3.5" ry="4.6"/><circle cx="290.5" cy="275.8" r="2"/><circle cx="298.0" cy="249.8" r="3.5"/><ellipse cx="298.0" cy="261.5" rx="3.5" ry="4.6"/><ellipse cx="298.0" cy="276.6" rx="3.5" ry="4.6"/><ellipse cx="305.6" cy="253.1" rx="3.5" ry="4.6"/><ellipse cx="305.6" cy="269.1" rx="3.5" ry="4.6"/><circle cx="309.8" cy="238.0" r="3.5"/><circle cx="309.8" cy="274.1" r="3.5"/><ellipse cx="297.2" cy="286.7" rx="5" ry="3.5"/><circle cx="305.6" cy="289.2" r="2"/><circle cx="326.5" cy="238.0" r="3.5"/><circle cx="386.9" cy="236.4" r="3.5"/><circle cx="394.4" cy="236.4" r="3.5"/><ellipse cx="365.0" cy="244.7" rx="3.5" ry="4.6"/><ellipse cx="372.6" cy="244.7" rx="3.5" ry="4.6"/><circle cx="358.3" cy="244.7" r="3.5"/><circle cx="380.1" cy="244.7" r="3.5"/><circle cx="343.2" cy="244.7" r="3.5"/><circle cx="334.0" cy="249.8" r="3.5"/><circle cx="317.2" cy="249.8" r="3.5"/><circle cx="311.4" cy="250.6" r="2"/><circle cx="315.6" cy="261.5" r="3.5"/><circle cx="321.4" cy="261.5" r="3.5"/><circle cx="341.6" cy="251.5" r="3.5"/><circle cx="356.7" cy="251.5" r="3.5"/><circle cx="341.6" cy="259.8" r="3.5"/><circle cx="356.7" cy="259.8" r="3.5"/><circle cx="367.6" cy="259.0" r="3.5"/><circle cx="367.6" cy="268.2" r="3.5"/><circle cx="367.6" cy="275.0" r="3.5"/><circle cx="380.1" cy="259.8" r="3.5"/><circle cx="376.8" cy="265.7" r="2"/><circle cx="387.7" cy="246.4" r="3.5"/><circle cx="387.7" cy="253.1" r="3.5"/><circle cx="387.7" cy="261.5" r="3.5"/><circle cx="403.6" cy="246.4" r="3.5"/><circle cx="403.6" cy="253.1" r="3.5"/><circle cx="403.6" cy="261.5" r="3.5"/><circle cx="411.2" cy="249.8" r="3.5"/><circle cx="411.2" cy="258.2" r="3.5"/><circle cx="417.0" cy="258.2" r="3.5"/><circle cx="387.7" cy="273.3" r="3.5"/><circle cx="395.2" cy="273.3" r="3.5"/><circle cx="402.8" cy="273.3" r="3.5"/><circle cx="417.0" cy="273.3" r="3.5"/><circle cx="423.0" cy="265.7" r="2"/><circle cx="333.2" cy="265.7" r="3.5"/><circle cx="341.6" cy="265.7" r="3.5"/><circle cx="352.5" cy="265.7" r="3.5"/><circle cx="327.3" cy="274.1" r="3.5"/><circle cx="333.2" cy="274.1" r="3.5"/><circle cx="341.6" cy="274.1" r="3.5"/><circle cx="311.4" cy="281.7" r="3.5"/><circle cx="327.3" cy="281.7" r="3.5"/><circle cx="333.2" cy="281.7" r="3.5"/><circle cx="341.6" cy="281.7" r="3.5"/><circle cx="352.5" cy="281.7" r="3.5"/><ellipse cx="395.2" cy="286.7" rx="3.5" ry="4.6"/><ellipse cx="403.6" cy="286.7" rx="3.5" ry="4.6"/><circle cx="372.6" cy="289.2" r="2"/></g><g fill="none" stroke="#e0a0c0" stroke-width="0.75"><rect x="215" y="134.7" width="30.0" height="16.8"/><rect x="254.4" y="123.8" width="30.2" height="31.0"/><rect x="286.3" y="121.3" width="70.4" height="35.2"/><rect x="260.3" y="161.5" width="26.8" height="11.8"/><rect x="199.9" y="164" width="13.4" height="27.8"/><rect x="366.7" y="121.3" width="10.1" height="55.7"/><rect x="357.5" y="121.3" width="20.1" height="55.7"/><rect x="382.7" y="121.3" width="31.0" height="31.0"/><rect x="233.4" y="184.3" width="28.6" height="15.1"/><rect x="324.8" y="176.7" width="30.2" height="29.4"/><rect x="365" y="181.7" width="14.3" height="26.9"/><rect x="386" y="176.7" width="31.9" height="29.4"/><rect x="384" y="211" width="17.0" height="27.0"/><rect x="269.5" y="238.9" width="26.0" height="11.7"/><rect x="257.8" y="283.3" width="12.5" height="5.9"/><rect x="360" y="254" width="14.3" height="26.8"/><rect x="381.8" y="265.7" width="26.9" height="15.1"/><rect x="392" y="283" width="15.0" height="8.0"/><rect x="334.3" y="161" width="16.0" height="5.0"/><rect x="312.3" y="209" width="17.0" height="4.5"/><circle cx="204.9" cy="134.3" r="6.3"/><circle cx="212.5" cy="203.6" r="7.5"/><circle cx="261.1" cy="210.3" r="8.2"/><circle cx="284.6" cy="192.6" r="7.5"/><circle cx="207.4" cy="223.7" r="7.5"/><circle cx="261.1" cy="228.7" r="7.5"/><circle cx="228.4" cy="259" r="7.5"/><circle cx="246.9" cy="254" r="7.5"/><circle cx="318" cy="261.5" r="7.5"/><circle cx="368.4" cy="244.7" r="7.5"/><circle cx="345.8" cy="227.9" r="7.5"/><circle cx="326.5" cy="234" r="6.5"/><circle cx="352.5" cy="273.3" r="6.5"/><circle cx="274.5" cy="276.6" r="4.5"/><circle cx="415" cy="252" r="6"/><circle cx="416" cy="265" r="6"/><rect x="272.9" y="204.4" width="31.8" height="14.3" rx="6"/><path d="M280 188.5L289 196.5M289 188.5L280 196.5"/><path d="M246.5 165.5V171M249.5 165.5V171M243 168.2H246.5M249.5 168.2H254M356.5 112.5V118M360 112.5V118M356 115.3H351M360 115.3H365M393 112.5V118M396.5 112.5V118M393 115.3H389M396.5 115.3H401M243 175.5V181M246.5 175.5V181M365 220H370.5M365 223.5H370.5M412.5 223.5H418M412.5 227H418M245.5 275.5H251.5M245.5 279H251.5M316.5 271V277M320 271V277M347.5 249V254M351 249V254M279.5 260.5H285M279.5 264H285M321.4 137.5V143.5M318.4 140.5H324.4M269.5 136.5V141.5M267 139H272M339.9 188V194M336.9 191H342.9M401.5 184V190M398.5 187H404.5M331 241V247M328 244H334M410 253V259M407 256H413M414 262V268M411 265H417"/><rect x="202.8" y="147.5" width="4.2" height="10.5"/><rect x="216" y="181" width="12.0" height="5.0"/><rect x="238.3" y="208" width="3.7" height="8.5"/><rect x="246" y="221" width="8.0" height="3.5"/><rect x="205.4" y="237" width="4.0" height="9.0"/><rect x="199.6" y="254" width="4.0" height="8.0"/><rect x="229.5" y="266.5" width="6.5" height="4.0"/><rect x="229.5" y="275" width="6.5" height="4.0"/><rect x="320.5" y="247.5" width="8.5" height="4.0"/><rect x="345.5" y="258" width="7.5" height="3.5"/><rect x="385" y="256" width="5.5" height="3.0"/><rect x="304" y="181" width="8.5" height="32.0"/><rect x="326.3" y="207.3" width="28.7" height="2.7"/></g><ellipse cx="204.9" cy="130.8" rx="4.0" ry="2.55" fill="#48b048"/><circle cx="204.9" cy="130.8" r="0.9" fill="#a8dca8"/><ellipse cx="204.9" cy="137.8" rx="4.0" ry="2.55" fill="#48b048"/><circle cx="204.9" cy="137.8" r="0.9" fill="#a8dca8"/><circle cx="204.9" cy="145.6" r="2.7" fill="#48b048"/><circle cx="204.9" cy="145.6" r="0.9" fill="#a8dca8"/><circle cx="204.9" cy="160.7" r="2.7" fill="#48b048"/><circle cx="204.9" cy="160.7" r="0.9" fill="#a8dca8"/><circle cx="199.9" cy="148.0" r="1.4" fill="#5aa850"/><circle cx="215.5" cy="113.7" r="1.4" fill="#5aa850"/><ellipse cx="217.5" cy="131.3" rx="2.55" ry="3.6" fill="#48b048"/><circle cx="217.5" cy="131.3" r="0.9" fill="#a8dca8"/><ellipse cx="225.0" cy="131.3" rx="2.55" ry="3.6" fill="#48b048"/><circle cx="225.0" cy="131.3" r="0.9" fill="#a8dca8"/><ellipse cx="233.4" cy="131.3" rx="2.55" ry="3.6" fill="#48b048"/><circle cx="233.4" cy="131.3" r="0.9" fill="#a8dca8"/><ellipse cx="241.0" cy="131.3" rx="2.55" ry="3.6" fill="#48b048"/><circle cx="241.0" cy="131.3" r="0.9" fill="#a8dca8"/><ellipse cx="217.5" cy="155.7" rx="2.55" ry="3.6" fill="#48b048"/><circle cx="217.5" cy="155.7" r="0.9" fill="#a8dca8"/><ellipse cx="225.0" cy="155.7" rx="2.55" ry="3.6" fill="#48b048"/><circle cx="225.0" cy="155.7" r="0.9" fill="#a8dca8"/><ellipse cx="233.4" cy="155.7" rx="2.55" ry="3.6" fill="#48b048"/><circle cx="233.4" cy="155.7" r="0.9" fill="#a8dca8"/><ellipse cx="241.0" cy="155.7" rx="2.55" ry="3.6" fill="#48b048"/><circle cx="241.0" cy="155.7" r="0.9" fill="#a8dca8"/><circle cx="217.5" cy="140.6" r="2.7" fill="#48b048"/><circle cx="217.5" cy="140.6" r="0.9" fill="#a8dca8"/><circle cx="233.4" cy="140.6" r="2.7" fill="#48b048"/><circle cx="233.4" cy="140.6" r="0.9" fill="#a8dca8"/><circle cx="217.5" cy="164.0" r="2.7" fill="#48b048"/><circle cx="217.5" cy="164.0" r="0.9" fill="#a8dca8"/><circle cx="233.4" cy="164.0" r="2.7" fill="#48b048"/><circle cx="233.4" cy="164.0" r="0.9" fill="#a8dca8"/><circle cx="217.5" cy="170.8" r="2.7" fill="#48b048"/><circle cx="217.5" cy="170.8" r="0.9" fill="#a8dca8"/><circle cx="233.4" cy="170.8" r="2.7" fill="#48b048"/><circle cx="233.4" cy="170.8" r="0.9" fill="#a8dca8"/><circle cx="249.4" cy="124.6" r="1.4" fill="#5aa850"/><circle cx="249.4" cy="135.5" r="2.7" fill="#48b048"/><circle cx="249.4" cy="135.5" r="0.9" fill="#a8dca8"/><circle cx="250.2" cy="151.5" r="2.7" fill="#48b048"/><circle cx="250.2" cy="151.5" r="0.9" fill="#a8dca8"/><circle cx="259.4" cy="128.0" r="2.7" fill="#48b048"/><circle cx="259.4" cy="128.0" r="0.9" fill="#a8dca8"/><circle cx="259.4" cy="138.9" r="2.7" fill="#48b048"/><circle cx="259.4" cy="138.9" r="0.9" fill="#a8dca8"/><circle cx="259.4" cy="149.8" r="2.7" fill="#48b048"/><circle cx="259.4" cy="149.8" r="0.9" fill="#a8dca8"/><circle cx="269.5" cy="123.8" r="4.4" fill="#48b048"/><circle cx="269.5" cy="123.8" r="2.3" fill="#282880"/><ellipse cx="269.5" cy="123.8" rx="1.3" ry="0.6" fill="#e0e0ff"/><circle cx="269.5" cy="154.0" r="4.4" fill="#48b048"/><circle cx="269.5" cy="154.0" r="2.3" fill="#282880"/><ellipse cx="269.5" cy="154.0" rx="1.3" ry="0.6" fill="#e0e0ff"/><circle cx="280.4" cy="128.0" r="2.7" fill="#48b048"/><circle cx="280.4" cy="128.0" r="0.9" fill="#a8dca8"/><circle cx="280.4" cy="149.8" r="2.7" fill="#48b048"/><circle cx="280.4" cy="149.8" r="0.9" fill="#a8dca8"/><rect x="291.9" y="126.00000000000001" width="5.6" height="5.6" rx="0.8" fill="#48b048"/><rect x="291.9" y="135.2" width="5.6" height="5.6" rx="0.8" fill="#48b048"/><circle cx="265.3" cy="168.2" r="2.7" fill="#48b048"/><circle cx="265.3" cy="168.2" r="0.9" fill="#a8dca8"/><circle cx="272.9" cy="168.2" r="2.7" fill="#48b048"/><circle cx="272.9" cy="168.2" r="0.9" fill="#a8dca8"/><circle cx="281.2" cy="168.2" r="2.7" fill="#48b048"/><circle cx="281.2" cy="168.2" r="0.9" fill="#a8dca8"/><circle cx="241.0" cy="168.2" r="2.7" fill="#48b048"/><circle cx="241.0" cy="168.2" r="0.9" fill="#a8dca8"/><circle cx="256.0" cy="168.2" r="2.7" fill="#48b048"/><circle cx="256.0" cy="168.2" r="0.9" fill="#a8dca8"/><circle cx="293.0" cy="160.7" r="2.7" fill="#48b048"/><circle cx="293.0" cy="160.7" r="0.9" fill="#a8dca8"/><circle cx="299.7" cy="160.7" r="2.7" fill="#48b048"/><circle cx="299.7" cy="160.7" r="0.9" fill="#a8dca8"/><circle cx="206.6" cy="170.0" r="2.7" fill="#48b048"/><circle cx="206.6" cy="170.0" r="0.9" fill="#a8dca8"/><circle cx="321.4" cy="121.3" r="5.6" fill="#000"/><circle cx="321.4" cy="121.3" r="2.6" fill="none" stroke="#888" stroke-width="0.6"/><circle cx="321.4" cy="156.5" r="5.6" fill="#000"/><circle cx="321.4" cy="156.5" r="2.6" fill="none" stroke="#888" stroke-width="0.6"/><circle cx="317.2" cy="113.7" r="1.4" fill="#5aa850"/><circle cx="317.2" cy="128.8" r="1.4" fill="#5aa850"/><circle cx="317.2" cy="148.0" r="1.4" fill="#5aa850"/><circle cx="350.8" cy="116.2" r="2.7" fill="#48b048"/><circle cx="350.8" cy="116.2" r="0.9" fill="#a8dca8"/><circle cx="366.7" cy="116.2" r="2.7" fill="#48b048"/><circle cx="366.7" cy="116.2" r="0.9" fill="#a8dca8"/><ellipse cx="371.8" cy="125.5" rx="4.0" ry="2.55" fill="#48b048"/><circle cx="371.8" cy="125.5" r="0.9" fill="#a8dca8"/><ellipse cx="371.8" cy="133.8" rx="4.0" ry="2.55" fill="#48b048"/><circle cx="371.8" cy="133.8" r="0.9" fill="#a8dca8"/><ellipse cx="371.8" cy="141.4" rx="4.0" ry="2.55" fill="#48b048"/><circle cx="371.8" cy="141.4" r="0.9" fill="#a8dca8"/><ellipse cx="371.8" cy="148.9" rx="4.0" ry="2.55" fill="#48b048"/><circle cx="371.8" cy="148.9" r="0.9" fill="#a8dca8"/><ellipse cx="371.8" cy="156.5" rx="4.0" ry="2.55" fill="#48b048"/><circle cx="371.8" cy="156.5" r="0.9" fill="#a8dca8"/><ellipse cx="371.8" cy="164.9" rx="4.0" ry="2.55" fill="#48b048"/><circle cx="371.8" cy="164.9" r="0.9" fill="#a8dca8"/><ellipse cx="371.8" cy="172.4" rx="4.0" ry="2.55" fill="#48b048"/><circle cx="371.8" cy="172.4" r="0.9" fill="#a8dca8"/><circle cx="361.7" cy="127.1" r="2.7" fill="#48b048"/><circle cx="361.7" cy="127.1" r="0.9" fill="#a8dca8"/><circle cx="361.7" cy="143.0" r="2.7" fill="#48b048"/><circle cx="361.7" cy="143.0" r="0.9" fill="#a8dca8"/><circle cx="361.7" cy="149.0" r="2.7" fill="#48b048"/><circle cx="361.7" cy="149.0" r="0.9" fill="#a8dca8"/><circle cx="361.7" cy="157.3" r="2.7" fill="#48b048"/><circle cx="361.7" cy="157.3" r="0.9" fill="#a8dca8"/><circle cx="361.7" cy="164.9" r="2.7" fill="#48b048"/><circle cx="361.7" cy="164.9" r="0.9" fill="#a8dca8"/><circle cx="361.7" cy="170.0" r="2.7" fill="#48b048"/><circle cx="361.7" cy="170.0" r="0.9" fill="#a8dca8"/><rect x="348.0" y="135.2" width="5.6" height="5.6" rx="0.8" fill="#48b048"/><rect x="348.0" y="145.2" width="5.6" height="5.6" rx="0.8" fill="#48b048"/><circle cx="383.5" cy="137.2" r="4.4" fill="#48b048"/><circle cx="383.5" cy="137.2" r="2.3" fill="#282880"/><ellipse cx="383.5" cy="137.2" rx="1.3" ry="0.6" fill="#e0e0ff"/><circle cx="413.7" cy="137.2" r="4.4" fill="#48b048"/><circle cx="413.7" cy="137.2" r="2.3" fill="#282880"/><ellipse cx="413.7" cy="137.2" rx="1.3" ry="0.6" fill="#e0e0ff"/><circle cx="387.7" cy="126.3" r="2.7" fill="#48b048"/><circle cx="387.7" cy="126.3" r="0.9" fill="#a8dca8"/><circle cx="408.7" cy="126.3" r="2.7" fill="#48b048"/><circle cx="408.7" cy="126.3" r="0.9" fill="#a8dca8"/><circle cx="387.7" cy="147.3" r="2.7" fill="#48b048"/><circle cx="387.7" cy="147.3" r="0.9" fill="#a8dca8"/><circle cx="398.6" cy="147.3" r="2.7" fill="#48b048"/><circle cx="398.6" cy="147.3" r="0.9" fill="#a8dca8"/><circle cx="408.7" cy="147.3" r="2.7" fill="#48b048"/><circle cx="408.7" cy="147.3" r="0.9" fill="#a8dca8"/><circle cx="386.9" cy="116.2" r="2.7" fill="#48b048"/><circle cx="386.9" cy="116.2" r="0.9" fill="#a8dca8"/><circle cx="402.8" cy="116.2" r="2.7" fill="#48b048"/><circle cx="402.8" cy="116.2" r="0.9" fill="#a8dca8"/><circle cx="407.8" cy="113.7" r="1.4" fill="#5aa850"/><circle cx="423.0" cy="125.5" r="1.4" fill="#5aa850"/><circle cx="381.0" cy="157.3" r="2.7" fill="#48b048"/><circle cx="381.0" cy="157.3" r="0.9" fill="#a8dca8"/><circle cx="387.7" cy="156.5" r="2.7" fill="#48b048"/><circle cx="387.7" cy="156.5" r="0.9" fill="#a8dca8"/><circle cx="394.4" cy="156.5" r="2.7" fill="#48b048"/><circle cx="394.4" cy="156.5" r="0.9" fill="#a8dca8"/><circle cx="409.5" cy="156.5" r="2.7" fill="#48b048"/><circle cx="409.5" cy="156.5" r="0.9" fill="#a8dca8"/><circle cx="393.6" cy="163.2" r="2.7" fill="#48b048"/><circle cx="393.6" cy="163.2" r="0.9" fill="#a8dca8"/><circle cx="409.5" cy="163.2" r="2.7" fill="#48b048"/><circle cx="409.5" cy="163.2" r="0.9" fill="#a8dca8"/><circle cx="394.4" cy="170.8" r="2.7" fill="#48b048"/><circle cx="394.4" cy="170.8" r="0.9" fill="#a8dca8"/><circle cx="409.5" cy="170.8" r="2.7" fill="#48b048"/><circle cx="409.5" cy="170.8" r="0.9" fill="#a8dca8"/><circle cx="338.2" cy="163.2" r="2.7" fill="#48b048"/><circle cx="338.2" cy="163.2" r="0.9" fill="#a8dca8"/><circle cx="353.3" cy="163.2" r="2.7" fill="#48b048"/><circle cx="353.3" cy="163.2" r="0.9" fill="#a8dca8"/><circle cx="207.4" cy="178.4" r="2.7" fill="#48b048"/><circle cx="207.4" cy="178.4" r="0.9" fill="#a8dca8"/><circle cx="207.4" cy="186.8" r="2.7" fill="#48b048"/><circle cx="207.4" cy="186.8" r="0.9" fill="#a8dca8"/><circle cx="218.3" cy="186.8" r="2.7" fill="#48b048"/><circle cx="218.3" cy="186.8" r="0.9" fill="#a8dca8"/><circle cx="232.6" cy="178.4" r="2.7" fill="#48b048"/><circle cx="232.6" cy="178.4" r="0.9" fill="#a8dca8"/><circle cx="238.5" cy="178.4" r="2.7" fill="#48b048"/><circle cx="238.5" cy="178.4" r="0.9" fill="#a8dca8"/><circle cx="253.6" cy="178.4" r="2.7" fill="#48b048"/><circle cx="253.6" cy="178.4" r="0.9" fill="#a8dca8"/><ellipse cx="265.3" cy="180.9" rx="4.0" ry="2.55" fill="#48b048"/><circle cx="265.3" cy="180.9" r="0.9" fill="#a8dca8"/><circle cx="278.7" cy="180.0" r="1.4" fill="#5aa850"/><circle cx="239.3" cy="191.8" r="2.7" fill="#48b048"/><circle cx="239.3" cy="191.8" r="0.9" fill="#a8dca8"/><circle cx="247.7" cy="191.8" r="2.7" fill="#48b048"/><circle cx="247.7" cy="191.8" r="0.9" fill="#a8dca8"/><circle cx="255.2" cy="191.8" r="2.7" fill="#48b048"/><circle cx="255.2" cy="191.8" r="0.9" fill="#a8dca8"/><circle cx="212.5" cy="200.2" r="2.7" fill="#48b048"/><circle cx="212.5" cy="200.2" r="0.9" fill="#a8dca8"/><circle cx="212.5" cy="207.8" r="2.7" fill="#48b048"/><circle cx="212.5" cy="207.8" r="0.9" fill="#a8dca8"/><circle cx="202.4" cy="196.0" r="2.7" fill="#48b048"/><circle cx="202.4" cy="196.0" r="0.9" fill="#a8dca8"/><circle cx="226.7" cy="195.2" r="2.7" fill="#48b048"/><circle cx="226.7" cy="195.2" r="0.9" fill="#a8dca8"/><circle cx="202.4" cy="212.0" r="2.7" fill="#48b048"/><circle cx="202.4" cy="212.0" r="0.9" fill="#a8dca8"/><circle cx="220.8" cy="211.1" r="2.7" fill="#48b048"/><circle cx="220.8" cy="211.1" r="0.9" fill="#a8dca8"/><circle cx="225.9" cy="211.1" r="2.7" fill="#48b048"/><circle cx="225.9" cy="211.1" r="0.9" fill="#a8dca8"/><circle cx="231.8" cy="211.1" r="2.7" fill="#48b048"/><circle cx="231.8" cy="211.1" r="0.9" fill="#a8dca8"/><circle cx="240.1" cy="204.4" r="2.7" fill="#48b048"/><circle cx="240.1" cy="204.4" r="0.9" fill="#a8dca8"/><circle cx="240.1" cy="220.3" r="2.7" fill="#48b048"/><circle cx="240.1" cy="220.3" r="0.9" fill="#a8dca8"/><circle cx="261.1" cy="206.0" r="2.7" fill="#48b048"/><circle cx="261.1" cy="206.0" r="0.9" fill="#a8dca8"/><circle cx="261.1" cy="214.5" r="2.7" fill="#48b048"/><circle cx="261.1" cy="214.5" r="0.9" fill="#a8dca8"/><circle cx="277.0" cy="192.6" r="2.7" fill="#48b048"/><circle cx="277.0" cy="192.6" r="0.9" fill="#a8dca8"/><circle cx="292.2" cy="192.6" r="2.7" fill="#48b048"/><circle cx="292.2" cy="192.6" r="0.9" fill="#a8dca8"/><circle cx="281.2" cy="211.1" r="2.7" fill="#48b048"/><circle cx="281.2" cy="211.1" r="0.9" fill="#a8dca8"/><circle cx="296.3" cy="211.1" r="2.7" fill="#48b048"/><circle cx="296.3" cy="211.1" r="0.9" fill="#a8dca8"/><circle cx="298.9" cy="176.7" r="2.7" fill="#48b048"/><circle cx="298.9" cy="176.7" r="0.9" fill="#a8dca8"/><circle cx="298.9" cy="182.6" r="2.7" fill="#48b048"/><circle cx="298.9" cy="182.6" r="0.9" fill="#a8dca8"/><circle cx="298.9" cy="196.8" r="2.7" fill="#48b048"/><circle cx="298.9" cy="196.8" r="0.9" fill="#a8dca8"/><circle cx="292.2" cy="176.7" r="2.7" fill="#48b048"/><circle cx="292.2" cy="176.7" r="0.9" fill="#a8dca8"/><circle cx="308.1" cy="178.4" r="2.7" fill="#48b048"/><circle cx="308.1" cy="178.4" r="0.9" fill="#a8dca8"/><circle cx="308.1" cy="185.1" r="2.7" fill="#48b048"/><circle cx="308.1" cy="185.1" r="0.9" fill="#a8dca8"/><circle cx="308.1" cy="192.6" r="2.7" fill="#48b048"/><circle cx="308.1" cy="192.6" r="0.9" fill="#a8dca8"/><circle cx="308.1" cy="200.2" r="2.7" fill="#48b048"/><circle cx="308.1" cy="200.2" r="0.9" fill="#a8dca8"/><circle cx="311.4" cy="211.1" r="2.7" fill="#48b048"/><circle cx="311.4" cy="211.1" r="0.9" fill="#a8dca8"/><circle cx="207.4" cy="220.3" r="2.7" fill="#48b048"/><circle cx="207.4" cy="220.3" r="0.9" fill="#a8dca8"/><circle cx="207.4" cy="227.0" r="2.7" fill="#48b048"/><circle cx="207.4" cy="227.0" r="0.9" fill="#a8dca8"/><circle cx="220.8" cy="226.2" r="2.7" fill="#48b048"/><circle cx="220.8" cy="226.2" r="0.9" fill="#a8dca8"/><circle cx="230.0" cy="226.2" r="2.7" fill="#48b048"/><circle cx="230.0" cy="226.2" r="0.9" fill="#a8dca8"/><circle cx="220.8" cy="232.9" r="2.7" fill="#48b048"/><circle cx="220.8" cy="232.9" r="0.9" fill="#a8dca8"/><circle cx="229.2" cy="232.9" r="2.7" fill="#48b048"/><circle cx="229.2" cy="232.9" r="0.9" fill="#a8dca8"/><circle cx="237.6" cy="232.9" r="2.7" fill="#48b048"/><circle cx="237.6" cy="232.9" r="0.9" fill="#a8dca8"/><circle cx="244.3" cy="232.9" r="2.7" fill="#48b048"/><circle cx="244.3" cy="232.9" r="0.9" fill="#a8dca8"/><circle cx="261.1" cy="224.5" r="2.7" fill="#48b048"/><circle cx="261.1" cy="224.5" r="0.9" fill="#a8dca8"/><circle cx="261.1" cy="232.9" r="2.7" fill="#48b048"/><circle cx="261.1" cy="232.9" r="0.9" fill="#a8dca8"/><circle cx="251.9" cy="218.7" r="2.7" fill="#48b048"/><circle cx="251.9" cy="218.7" r="0.9" fill="#a8dca8"/><circle cx="281.2" cy="224.5" r="2.7" fill="#48b048"/><circle cx="281.2" cy="224.5" r="0.9" fill="#a8dca8"/><circle cx="281.2" cy="232.9" r="2.7" fill="#48b048"/><circle cx="281.2" cy="232.9" r="0.9" fill="#a8dca8"/><circle cx="297.2" cy="224.5" r="2.7" fill="#48b048"/><circle cx="297.2" cy="224.5" r="0.9" fill="#a8dca8"/><circle cx="297.2" cy="232.9" r="2.7" fill="#48b048"/><circle cx="297.2" cy="232.9" r="0.9" fill="#a8dca8"/><circle cx="207.4" cy="233.8" r="2.7" fill="#48b048"/><circle cx="207.4" cy="233.8" r="0.9" fill="#a8dca8"/><circle cx="308.1" cy="225.4" r="2.7" fill="#48b048"/><circle cx="308.1" cy="225.4" r="0.9" fill="#a8dca8"/><circle cx="308.1" cy="232.9" r="2.7" fill="#48b048"/><circle cx="308.1" cy="232.9" r="0.9" fill="#a8dca8"/><circle cx="339.9" cy="176.7" r="4.4" fill="#48b048"/><circle cx="339.9" cy="176.7" r="2.3" fill="#282880"/><ellipse cx="339.9" cy="176.7" rx="1.3" ry="0.6" fill="#e0e0ff"/><circle cx="339.9" cy="205.2" r="4.4" fill="#48b048"/><circle cx="339.9" cy="205.2" r="2.3" fill="#282880"/><ellipse cx="339.9" cy="205.2" rx="1.3" ry="0.6" fill="#e0e0ff"/><circle cx="329.8" cy="180.9" r="2.7" fill="#48b048"/><circle cx="329.8" cy="180.9" r="0.9" fill="#a8dca8"/><circle cx="350.8" cy="180.9" r="2.7" fill="#48b048"/><circle cx="350.8" cy="180.9" r="0.9" fill="#a8dca8"/><circle cx="329.8" cy="191.8" r="2.7" fill="#48b048"/><circle cx="329.8" cy="191.8" r="0.9" fill="#a8dca8"/><circle cx="329.8" cy="201.9" r="2.7" fill="#48b048"/><circle cx="329.8" cy="201.9" r="0.9" fill="#a8dca8"/><circle cx="350.8" cy="201.9" r="2.7" fill="#48b048"/><circle cx="350.8" cy="201.9" r="0.9" fill="#a8dca8"/><circle cx="319.7" cy="177.6" r="2.7" fill="#48b048"/><circle cx="319.7" cy="177.6" r="0.9" fill="#a8dca8"/><circle cx="319.7" cy="186.8" r="2.7" fill="#48b048"/><circle cx="319.7" cy="186.8" r="0.9" fill="#a8dca8"/><circle cx="319.7" cy="201.9" r="2.7" fill="#48b048"/><circle cx="319.7" cy="201.9" r="0.9" fill="#a8dca8"/><circle cx="381.0" cy="172.5" r="2.7" fill="#48b048"/><circle cx="381.0" cy="172.5" r="0.9" fill="#a8dca8"/><circle cx="387.7" cy="172.5" r="2.7" fill="#48b048"/><circle cx="387.7" cy="172.5" r="0.9" fill="#a8dca8"/><circle cx="372.6" cy="187.6" r="2.7" fill="#48b048"/><circle cx="372.6" cy="187.6" r="0.9" fill="#a8dca8"/><circle cx="372.6" cy="196.0" r="2.7" fill="#48b048"/><circle cx="372.6" cy="196.0" r="0.9" fill="#a8dca8"/><circle cx="372.6" cy="202.7" r="2.7" fill="#48b048"/><circle cx="372.6" cy="202.7" r="0.9" fill="#a8dca8"/><circle cx="360.9" cy="186.0" r="2.7" fill="#48b048"/><circle cx="360.9" cy="186.0" r="0.9" fill="#a8dca8"/><circle cx="360.9" cy="205.2" r="1.4" fill="#5aa850"/><circle cx="386.0" cy="191.8" r="4.4" fill="#48b048"/><circle cx="386.0" cy="191.8" r="2.3" fill="#282880"/><ellipse cx="386.0" cy="191.8" rx="1.3" ry="0.6" fill="#e0e0ff"/><circle cx="417.0" cy="191.8" r="4.4" fill="#48b048"/><circle cx="417.0" cy="191.8" r="2.3" fill="#282880"/><ellipse cx="417.0" cy="191.8" rx="1.3" ry="0.6" fill="#e0e0ff"/><circle cx="391.0" cy="180.9" r="2.7" fill="#48b048"/><circle cx="391.0" cy="180.9" r="0.9" fill="#a8dca8"/><circle cx="402.0" cy="180.9" r="2.7" fill="#48b048"/><circle cx="402.0" cy="180.9" r="0.9" fill="#a8dca8"/><circle cx="412.9" cy="180.9" r="2.7" fill="#48b048"/><circle cx="412.9" cy="180.9" r="0.9" fill="#a8dca8"/><circle cx="391.0" cy="201.9" r="2.7" fill="#48b048"/><circle cx="391.0" cy="201.9" r="0.9" fill="#a8dca8"/><circle cx="412.9" cy="201.9" r="2.7" fill="#48b048"/><circle cx="412.9" cy="201.9" r="0.9" fill="#a8dca8"/><circle cx="405.3" cy="200.2" r="1.4" fill="#5aa850"/><circle cx="423.0" cy="211.1" r="1.4" fill="#5aa850"/><circle cx="314.7" cy="211.1" r="2.7" fill="#48b048"/><circle cx="314.7" cy="211.1" r="0.9" fill="#a8dca8"/><circle cx="327.3" cy="211.1" r="2.7" fill="#48b048"/><circle cx="327.3" cy="211.1" r="0.9" fill="#a8dca8"/><ellipse cx="356.7" cy="214.5" rx="4.0" ry="2.55" fill="#48b048"/><circle cx="356.7" cy="214.5" r="0.9" fill="#a8dca8"/><circle cx="367.6" cy="214.5" r="2.7" fill="#48b048"/><circle cx="367.6" cy="214.5" r="0.9" fill="#a8dca8"/><circle cx="367.6" cy="229.6" r="2.7" fill="#48b048"/><circle cx="367.6" cy="229.6" r="0.9" fill="#a8dca8"/><ellipse cx="381.0" cy="213.6" rx="4.0" ry="2.55" fill="#48b048"/><circle cx="381.0" cy="213.6" r="0.9" fill="#a8dca8"/><ellipse cx="381.0" cy="221.2" rx="4.0" ry="2.55" fill="#48b048"/><circle cx="381.0" cy="221.2" r="0.9" fill="#a8dca8"/><ellipse cx="381.0" cy="229.6" rx="4.0" ry="2.55" fill="#48b048"/><circle cx="381.0" cy="229.6" r="0.9" fill="#a8dca8"/><ellipse cx="381.0" cy="236.3" rx="4.0" ry="2.55" fill="#48b048"/><circle cx="381.0" cy="236.3" r="0.9" fill="#a8dca8"/><ellipse cx="405.3" cy="213.6" rx="4.0" ry="2.55" fill="#48b048"/><circle cx="405.3" cy="213.6" r="0.9" fill="#a8dca8"/><ellipse cx="405.3" cy="221.2" rx="4.0" ry="2.55" fill="#48b048"/><circle cx="405.3" cy="221.2" r="0.9" fill="#a8dca8"/><ellipse cx="405.3" cy="229.6" rx="4.0" ry="2.55" fill="#48b048"/><circle cx="405.3" cy="229.6" r="0.9" fill="#a8dca8"/><ellipse cx="405.3" cy="236.3" rx="4.0" ry="2.55" fill="#48b048"/><circle cx="405.3" cy="236.3" r="0.9" fill="#a8dca8"/><circle cx="394.4" cy="221.2" r="2.7" fill="#48b048"/><circle cx="394.4" cy="221.2" r="0.9" fill="#a8dca8"/><circle cx="415.4" cy="217.8" r="2.7" fill="#48b048"/><circle cx="415.4" cy="217.8" r="0.9" fill="#a8dca8"/><circle cx="415.4" cy="232.9" r="2.7" fill="#48b048"/><circle cx="415.4" cy="232.9" r="0.9" fill="#a8dca8"/><circle cx="343.2" cy="217.8" r="2.7" fill="#48b048"/><circle cx="343.2" cy="217.8" r="0.9" fill="#a8dca8"/><circle cx="327.3" cy="218.7" r="2.7" fill="#48b048"/><circle cx="327.3" cy="218.7" r="0.9" fill="#a8dca8"/><circle cx="314.7" cy="219.5" r="2.7" fill="#48b048"/><circle cx="314.7" cy="219.5" r="0.9" fill="#a8dca8"/><circle cx="342.4" cy="228.7" r="2.7" fill="#48b048"/><circle cx="342.4" cy="228.7" r="0.9" fill="#a8dca8"/><circle cx="349.1" cy="228.7" r="2.7" fill="#48b048"/><circle cx="349.1" cy="228.7" r="0.9" fill="#a8dca8"/><circle cx="326.5" cy="231.0" r="2.7" fill="#48b048"/><circle cx="326.5" cy="231.0" r="0.9" fill="#a8dca8"/><circle cx="314.7" cy="233.8" r="2.7" fill="#48b048"/><circle cx="314.7" cy="233.8" r="0.9" fill="#a8dca8"/><circle cx="360.9" cy="234.6" r="1.4" fill="#5aa850"/><circle cx="248.5" cy="236.4" r="2.7" fill="#48b048"/><circle cx="248.5" cy="236.4" r="0.9" fill="#a8dca8"/><circle cx="214.1" cy="246.4" r="2.7" fill="#48b048"/><circle cx="214.1" cy="246.4" r="0.9" fill="#a8dca8"/><circle cx="221.7" cy="246.4" r="2.7" fill="#48b048"/><circle cx="221.7" cy="246.4" r="0.9" fill="#a8dca8"/><circle cx="229.2" cy="246.4" r="2.7" fill="#48b048"/><circle cx="229.2" cy="246.4" r="0.9" fill="#a8dca8"/><circle cx="236.8" cy="248.0" r="2.7" fill="#48b048"/><circle cx="236.8" cy="248.0" r="0.9" fill="#a8dca8"/><circle cx="201.6" cy="249.8" r="2.7" fill="#48b048"/><circle cx="201.6" cy="249.8" r="0.9" fill="#a8dca8"/><circle cx="207.4" cy="249.8" r="2.7" fill="#48b048"/><circle cx="207.4" cy="249.8" r="0.9" fill="#a8dca8"/><circle cx="199.9" cy="242.2" r="1.4" fill="#5aa850"/><circle cx="201.6" cy="265.7" r="2.7" fill="#48b048"/><circle cx="201.6" cy="265.7" r="0.9" fill="#a8dca8"/><circle cx="199.9" cy="274.1" r="1.4" fill="#5aa850"/><ellipse cx="225.0" cy="259.0" rx="2.55" ry="3.6" fill="#48b048"/><circle cx="225.0" cy="259.0" r="0.9" fill="#a8dca8"/><ellipse cx="233.4" cy="259.0" rx="2.55" ry="3.6" fill="#48b048"/><circle cx="233.4" cy="259.0" r="0.9" fill="#a8dca8"/><circle cx="246.9" cy="250.6" r="2.7" fill="#48b048"/><circle cx="246.9" cy="250.6" r="0.9" fill="#a8dca8"/><circle cx="246.9" cy="258.2" r="2.7" fill="#48b048"/><circle cx="246.9" cy="258.2" r="0.9" fill="#a8dca8"/><circle cx="259.4" cy="244.7" r="2.7" fill="#48b048"/><circle cx="259.4" cy="244.7" r="0.9" fill="#a8dca8"/><circle cx="267.0" cy="255.6" r="1.4" fill="#5aa850"/><circle cx="259.4" cy="259.8" r="2.7" fill="#48b048"/><circle cx="259.4" cy="259.8" r="0.9" fill="#a8dca8"/><ellipse cx="215.8" cy="265.7" rx="4.0" ry="2.55" fill="#48b048"/><circle cx="215.8" cy="265.7" r="0.9" fill="#a8dca8"/><ellipse cx="215.8" cy="274.1" rx="4.0" ry="2.55" fill="#48b048"/><circle cx="215.8" cy="274.1" r="0.9" fill="#a8dca8"/><ellipse cx="215.8" cy="281.7" rx="4.0" ry="2.55" fill="#48b048"/><circle cx="215.8" cy="281.7" r="0.9" fill="#a8dca8"/><circle cx="225.0" cy="271.6" r="2.7" fill="#48b048"/><circle cx="225.0" cy="271.6" r="0.9" fill="#a8dca8"/><circle cx="225.0" cy="279.1" r="2.7" fill="#48b048"/><circle cx="225.0" cy="279.1" r="0.9" fill="#a8dca8"/><circle cx="225.0" cy="286.7" r="2.7" fill="#48b048"/><circle cx="225.0" cy="286.7" r="0.9" fill="#a8dca8"/><circle cx="240.1" cy="271.6" r="2.7" fill="#48b048"/><circle cx="240.1" cy="271.6" r="0.9" fill="#a8dca8"/><circle cx="240.1" cy="279.1" r="2.7" fill="#48b048"/><circle cx="240.1" cy="279.1" r="0.9" fill="#a8dca8"/><circle cx="240.1" cy="286.7" r="2.7" fill="#48b048"/><circle cx="240.1" cy="286.7" r="0.9" fill="#a8dca8"/><circle cx="248.5" cy="269.1" r="2.7" fill="#48b048"/><circle cx="248.5" cy="269.1" r="0.9" fill="#a8dca8"/><circle cx="248.5" cy="285.0" r="2.7" fill="#48b048"/><circle cx="248.5" cy="285.0" r="0.9" fill="#a8dca8"/><rect x="256.59999999999997" y="283.59999999999997" width="5.6" height="5.6" rx="0.8" fill="#48b048"/><rect x="264.2" y="283.59999999999997" width="5.6" height="5.6" rx="0.8" fill="#48b048"/><ellipse cx="274.5" cy="244.7" rx="2.55" ry="3.6" fill="#48b048"/><circle cx="274.5" cy="244.7" r="0.9" fill="#a8dca8"/><ellipse cx="282.1" cy="244.7" rx="2.55" ry="3.6" fill="#48b048"/><circle cx="282.1" cy="244.7" r="0.9" fill="#a8dca8"/><ellipse cx="290.5" cy="244.7" rx="2.55" ry="3.6" fill="#48b048"/><circle cx="290.5" cy="244.7" r="0.9" fill="#a8dca8"/><circle cx="274.5" cy="254.8" r="2.7" fill="#48b048"/><circle cx="274.5" cy="254.8" r="0.9" fill="#a8dca8"/><circle cx="274.5" cy="264.0" r="2.7" fill="#48b048"/><circle cx="274.5" cy="264.0" r="0.9" fill="#a8dca8"/><circle cx="290.5" cy="254.8" r="2.7" fill="#48b048"/><circle cx="290.5" cy="254.8" r="0.9" fill="#a8dca8"/><circle cx="290.5" cy="264.0" r="2.7" fill="#48b048"/><circle cx="290.5" cy="264.0" r="0.9" fill="#a8dca8"/><ellipse cx="274.5" cy="276.6" rx="2.55" ry="3.6" fill="#48b048"/><circle cx="274.5" cy="276.6" r="0.9" fill="#a8dca8"/><circle cx="290.5" cy="275.8" r="1.4" fill="#5aa850"/><circle cx="298.0" cy="249.8" r="2.7" fill="#48b048"/><circle cx="298.0" cy="249.8" r="0.9" fill="#a8dca8"/><ellipse cx="298.0" cy="261.5" rx="2.55" ry="3.6" fill="#48b048"/><circle cx="298.0" cy="261.5" r="0.9" fill="#a8dca8"/><ellipse cx="298.0" cy="276.6" rx="2.55" ry="3.6" fill="#48b048"/><circle cx="298.0" cy="276.6" r="0.9" fill="#a8dca8"/><ellipse cx="305.6" cy="253.1" rx="2.55" ry="3.6" fill="#48b048"/><circle cx="305.6" cy="253.1" r="0.9" fill="#a8dca8"/><ellipse cx="305.6" cy="269.1" rx="2.55" ry="3.6" fill="#48b048"/><circle cx="305.6" cy="269.1" r="0.9" fill="#a8dca8"/><circle cx="309.8" cy="238.0" r="2.7" fill="#48b048"/><circle cx="309.8" cy="238.0" r="0.9" fill="#a8dca8"/><circle cx="309.8" cy="274.1" r="2.7" fill="#48b048"/><circle cx="309.8" cy="274.1" r="0.9" fill="#a8dca8"/><ellipse cx="297.2" cy="286.7" rx="4.0" ry="2.55" fill="#48b048"/><circle cx="297.2" cy="286.7" r="0.9" fill="#a8dca8"/><circle cx="305.6" cy="289.2" r="1.4" fill="#5aa850"/><circle cx="326.5" cy="238.0" r="2.7" fill="#48b048"/><circle cx="326.5" cy="238.0" r="0.9" fill="#a8dca8"/><circle cx="386.9" cy="236.4" r="2.7" fill="#48b048"/><circle cx="386.9" cy="236.4" r="0.9" fill="#a8dca8"/><circle cx="394.4" cy="236.4" r="2.7" fill="#48b048"/><circle cx="394.4" cy="236.4" r="0.9" fill="#a8dca8"/><ellipse cx="365.0" cy="244.7" rx="2.55" ry="3.6" fill="#48b048"/><circle cx="365.0" cy="244.7" r="0.9" fill="#a8dca8"/><ellipse cx="372.6" cy="244.7" rx="2.55" ry="3.6" fill="#48b048"/><circle cx="372.6" cy="244.7" r="0.9" fill="#a8dca8"/><circle cx="358.3" cy="244.7" r="2.7" fill="#48b048"/><circle cx="358.3" cy="244.7" r="0.9" fill="#a8dca8"/><circle cx="380.1" cy="244.7" r="2.7" fill="#48b048"/><circle cx="380.1" cy="244.7" r="0.9" fill="#a8dca8"/><circle cx="343.2" cy="244.7" r="2.7" fill="#48b048"/><circle cx="343.2" cy="244.7" r="0.9" fill="#a8dca8"/><circle cx="334.0" cy="249.8" r="2.7" fill="#48b048"/><circle cx="334.0" cy="249.8" r="0.9" fill="#a8dca8"/><circle cx="317.2" cy="249.8" r="2.7" fill="#48b048"/><circle cx="317.2" cy="249.8" r="0.9" fill="#a8dca8"/><circle cx="311.4" cy="250.6" r="1.4" fill="#5aa850"/><circle cx="315.6" cy="261.5" r="2.7" fill="#48b048"/><circle cx="315.6" cy="261.5" r="0.9" fill="#a8dca8"/><circle cx="321.4" cy="261.5" r="2.7" fill="#48b048"/><circle cx="321.4" cy="261.5" r="0.9" fill="#a8dca8"/><circle cx="341.6" cy="251.5" r="2.7" fill="#48b048"/><circle cx="341.6" cy="251.5" r="0.9" fill="#a8dca8"/><circle cx="356.7" cy="251.5" r="2.7" fill="#48b048"/><circle cx="356.7" cy="251.5" r="0.9" fill="#a8dca8"/><circle cx="341.6" cy="259.8" r="2.7" fill="#48b048"/><circle cx="341.6" cy="259.8" r="0.9" fill="#a8dca8"/><circle cx="356.7" cy="259.8" r="2.7" fill="#48b048"/><circle cx="356.7" cy="259.8" r="0.9" fill="#a8dca8"/><circle cx="367.6" cy="259.0" r="2.7" fill="#48b048"/><circle cx="367.6" cy="259.0" r="0.9" fill="#a8dca8"/><circle cx="367.6" cy="268.2" r="2.7" fill="#48b048"/><circle cx="367.6" cy="268.2" r="0.9" fill="#a8dca8"/><circle cx="367.6" cy="275.0" r="2.7" fill="#48b048"/><circle cx="367.6" cy="275.0" r="0.9" fill="#a8dca8"/><circle cx="380.1" cy="259.8" r="2.7" fill="#48b048"/><circle cx="380.1" cy="259.8" r="0.9" fill="#a8dca8"/><circle cx="376.8" cy="265.7" r="1.4" fill="#5aa850"/><circle cx="387.7" cy="246.4" r="2.7" fill="#48b048"/><circle cx="387.7" cy="246.4" r="0.9" fill="#a8dca8"/><circle cx="387.7" cy="253.1" r="2.7" fill="#48b048"/><circle cx="387.7" cy="253.1" r="0.9" fill="#a8dca8"/><circle cx="387.7" cy="261.5" r="2.7" fill="#48b048"/><circle cx="387.7" cy="261.5" r="0.9" fill="#a8dca8"/><circle cx="403.6" cy="246.4" r="2.7" fill="#48b048"/><circle cx="403.6" cy="246.4" r="0.9" fill="#a8dca8"/><circle cx="403.6" cy="253.1" r="2.7" fill="#48b048"/><circle cx="403.6" cy="253.1" r="0.9" fill="#a8dca8"/><circle cx="403.6" cy="261.5" r="2.7" fill="#48b048"/><circle cx="403.6" cy="261.5" r="0.9" fill="#a8dca8"/><circle cx="411.2" cy="249.8" r="2.7" fill="#48b048"/><circle cx="411.2" cy="249.8" r="0.9" fill="#a8dca8"/><circle cx="411.2" cy="258.2" r="2.7" fill="#48b048"/><circle cx="411.2" cy="258.2" r="0.9" fill="#a8dca8"/><circle cx="417.0" cy="258.2" r="2.7" fill="#48b048"/><circle cx="417.0" cy="258.2" r="0.9" fill="#a8dca8"/><circle cx="387.7" cy="273.3" r="2.7" fill="#48b048"/><circle cx="387.7" cy="273.3" r="0.9" fill="#a8dca8"/><circle cx="395.2" cy="273.3" r="2.7" fill="#48b048"/><circle cx="395.2" cy="273.3" r="0.9" fill="#a8dca8"/><circle cx="402.8" cy="273.3" r="2.7" fill="#48b048"/><circle cx="402.8" cy="273.3" r="0.9" fill="#a8dca8"/><circle cx="417.0" cy="273.3" r="2.7" fill="#48b048"/><circle cx="417.0" cy="273.3" r="0.9" fill="#a8dca8"/><circle cx="423.0" cy="265.7" r="1.4" fill="#5aa850"/><circle cx="333.2" cy="265.7" r="2.7" fill="#48b048"/><circle cx="333.2" cy="265.7" r="0.9" fill="#a8dca8"/><circle cx="341.6" cy="265.7" r="2.7" fill="#48b048"/><circle cx="341.6" cy="265.7" r="0.9" fill="#a8dca8"/><circle cx="352.5" cy="265.7" r="2.7" fill="#48b048"/><circle cx="352.5" cy="265.7" r="0.9" fill="#a8dca8"/><circle cx="327.3" cy="274.1" r="2.7" fill="#48b048"/><circle cx="327.3" cy="274.1" r="0.9" fill="#a8dca8"/><circle cx="333.2" cy="274.1" r="2.7" fill="#48b048"/><circle cx="333.2" cy="274.1" r="0.9" fill="#a8dca8"/><circle cx="341.6" cy="274.1" r="2.7" fill="#48b048"/><circle cx="341.6" cy="274.1" r="0.9" fill="#a8dca8"/><circle cx="311.4" cy="281.7" r="2.7" fill="#48b048"/><circle cx="311.4" cy="281.7" r="0.9" fill="#a8dca8"/><circle cx="327.3" cy="281.7" r="2.7" fill="#48b048"/><circle cx="327.3" cy="281.7" r="0.9" fill="#a8dca8"/><circle cx="333.2" cy="281.7" r="2.7" fill="#48b048"/><circle cx="333.2" cy="281.7" r="0.9" fill="#a8dca8"/><circle cx="341.6" cy="281.7" r="2.7" fill="#48b048"/><circle cx="341.6" cy="281.7" r="0.9" fill="#a8dca8"/><circle cx="352.5" cy="281.7" r="2.7" fill="#48b048"/><circle cx="352.5" cy="281.7" r="0.9" fill="#a8dca8"/><ellipse cx="395.2" cy="286.7" rx="2.55" ry="3.6" fill="#48b048"/><circle cx="395.2" cy="286.7" r="0.9" fill="#a8dca8"/><ellipse cx="403.6" cy="286.7" rx="2.55" ry="3.6" fill="#48b048"/><circle cx="403.6" cy="286.7" r="0.9" fill="#a8dca8"/><circle cx="372.6" cy="289.2" r="1.4" fill="#5aa850"/><path d="M29.5 61.8V366.3M33.5 61.8V366.3M37.5 61.8V366.3M41.5 61.8V366.3M45.5 61.8V366.3M49.5 61.8V366.3M53.5 61.8V366.3M57.5 61.8V366.3M61.5 61.8V366.3M65.5 61.8V366.3M69.5 61.8V366.3M73.5 61.8V366.3M76.5 61.8V366.3M80.5 61.8V366.3M84.5 61.8V366.3M88.5 61.8V366.3M92.5 61.8V366.3M96.5 61.8V366.3M100.5 61.8V366.3M104.5 61.8V366.3M108.5 61.8V366.3M112.5 61.8V366.3M116.5 61.8V366.3M120.5 61.8V366.3M124.5 61.8V366.3M128.5 61.8V366.3M132.5 61.8V366.3M136.5 61.8V366.3M140.5 61.8V366.3M144.5 61.8V366.3M147.5 61.8V366.3M151.5 61.8V366.3M155.5 61.8V366.3M159.5 61.8V366.3M163.5 61.8V366.3M167.5 61.8V366.3M171.5 61.8V366.3M175.5 61.8V366.3M179.5 61.8V366.3M183.5 61.8V366.3M187.5 61.8V366.3M191.5 61.8V366.3M195.5 61.8V366.3M199.5 61.8V366.3M203.5 61.8V366.3M207.5 61.8V366.3M211.5 61.8V366.3M215.5 61.8V366.3M219.5 61.8V366.3M222.5 61.8V366.3M226.5 61.8V366.3M230.5 61.8V366.3M234.5 61.8V366.3M238.5 61.8V366.3M242.5 61.8V366.3M246.5 61.8V366.3M250.5 61.8V366.3M254.5 61.8V366.3M258.5 61.8V366.3M262.5 61.8V366.3M266.5 61.8V366.3M270.5 61.8V366.3M274.5 61.8V366.3M278.5 61.8V366.3M282.5 61.8V366.3M286.5 61.8V366.3M290.5 61.8V366.3M293.5 61.8V366.3M297.5 61.8V366.3M301.5 61.8V366.3M305.5 61.8V366.3M309.5 61.8V366.3M313.5 61.8V366.3M317.5 61.8V366.3M321.5 61.8V366.3M325.5 61.8V366.3M329.5 61.8V366.3M333.5 61.8V366.3M337.5 61.8V366.3M341.5 61.8V366.3M345.5 61.8V366.3M349.5 61.8V366.3M353.5 61.8V366.3M357.5 61.8V366.3M361.5 61.8V366.3M365.5 61.8V366.3M368.5 61.8V366.3M372.5 61.8V366.3M376.5 61.8V366.3M380.5 61.8V366.3M384.5 61.8V366.3M388.5 61.8V366.3M392.5 61.8V366.3M396.5 61.8V366.3M400.5 61.8V366.3M404.5 61.8V366.3M408.5 61.8V366.3M412.5 61.8V366.3M416.5 61.8V366.3M420.5 61.8V366.3M424.5 61.8V366.3M428.5 61.8V366.3M432.5 61.8V366.3M436.5 61.8V366.3M439.5 61.8V366.3M443.5 61.8V366.3M447.5 61.8V366.3M451.5 61.8V366.3M455.5 61.8V366.3M459.5 61.8V366.3M463.5 61.8V366.3M467.5 61.8V366.3M471.5 61.8V366.3M475.5 61.8V366.3M479.5 61.8V366.3M483.5 61.8V366.3M487.5 61.8V366.3M491.5 61.8V366.3M495.5 61.8V366.3M499.5 61.8V366.3M503.5 61.8V366.3M507.5 61.8V366.3M511.5 61.8V366.3M514.5 61.8V366.3M518.5 61.8V366.3M522.5 61.8V366.3M526.5 61.8V366.3M530.5 61.8V366.3M534.5 61.8V366.3M538.5 61.8V366.3M542.5 61.8V366.3M546.5 61.8V366.3M550.5 61.8V366.3M554.5 61.8V366.3M558.5 61.8V366.3M562.5 61.8V366.3M566.5 61.8V366.3M570.5 61.8V366.3M574.5 61.8V366.3M578.5 61.8V366.3M582.5 61.8V366.3M585.5 61.8V366.3M589.5 61.8V366.3M593.5 61.8V366.3M597.5 61.8V366.3M601.5 61.8V366.3M605.5 61.8V366.3M609.5 61.8V366.3M613.5 61.8V366.3M617.5 61.8V366.3M621.5 61.8V366.3M625.5 61.8V366.3M629.5 61.8V366.3M633.5 61.8V366.3M637.5 61.8V366.3M641.5 61.8V366.3M645.5 61.8V366.3M649.5 61.8V366.3M653.5 61.8V366.3M657.5 61.8V366.3M660.5 61.8V366.3M664.5 61.8V366.3M668.5 61.8V366.3M672.5 61.8V366.3M676.5 61.8V366.3M680.5 61.8V366.3M684.5 61.8V366.3M688.5 61.8V366.3M692.5 61.8V366.3M696.5 61.8V366.3M700.5 61.8V366.3M704.5 61.8V366.3M708.5 61.8V366.3M28 64.5H711M28 68.5H711M28 72.5H711M28 76.5H711M28 80.5H711M28 84.5H711M28 87.5H711M28 91.5H711M28 95.5H711M28 99.5H711M28 103.5H711M28 107.5H711M28 111.5H711M28 115.5H711M28 119.5H711M28 123.5H711M28 127.5H711M28 130.5H711M28 134.5H711M28 138.5H711M28 142.5H711M28 146.5H711M28 150.5H711M28 154.5H711M28 158.5H711M28 162.5H711M28 166.5H711M28 170.5H711M28 174.5H711M28 177.5H711M28 181.5H711M28 185.5H711M28 189.5H711M28 193.5H711M28 197.5H711M28 201.5H711M28 205.5H711M28 209.5H711M28 213.5H711M28 217.5H711M28 220.5H711M28 224.5H711M28 228.5H711M28 232.5H711M28 236.5H711M28 240.5H711M28 244.5H711M28 248.5H711M28 252.5H711M28 256.5H711M28 260.5H711M28 263.5H711M28 267.5H711M28 271.5H711M28 275.5H711M28 279.5H711M28 283.5H711M28 287.5H711M28 291.5H711M28 295.5H711M28 299.5H711M28 303.5H711M28 306.5H711M28 310.5H711M28 314.5H711M28 318.5H711M28 322.5H711M28 326.5H711M28 330.5H711M28 334.5H711M28 338.5H711M28 342.5H711M28 346.5H711M28 350.5H711M28 353.5H711M28 357.5H711M28 361.5H711M28 365.5H711" stroke="#fff" stroke-opacity="0.055" stroke-width="1" fill="none" shape-rendering="crispEdges" clip-path="url(#bc)"/><circle cx="202.2" cy="115.5" r="5.3" fill="none" stroke="#bbb" stroke-width="0.8"/><circle cx="420" cy="115.6" r="5.3" fill="none" stroke="#bbb" stroke-width="0.8"/><circle cx="202.2" cy="287.3" r="5.3" fill="none" stroke="#bbb" stroke-width="0.8"/><circle cx="420" cy="287.5" r="5.3" fill="none" stroke="#bbb" stroke-width="0.8"/><text x="318" y="134.7" font-family="Liberation Sans" font-size="4.5" fill="#e8b8d0" textLength="10" lengthAdjust="spacingAndGlyphs">&gt;10u</text><text x="226" y="150" font-family="Liberation Sans" font-size="4.5" fill="#e8b8d0" textLength="9" lengthAdjust="spacingAndGlyphs">IC1</text><text x="392" y="141" font-family="Liberation Sans" font-size="4.5" fill="#e8b8d0" textLength="9" lengthAdjust="spacingAndGlyphs">IC4</text><text x="334" y="190.5" font-family="Liberation Sans" font-size="4.5" fill="#e8b8d0" textLength="9" lengthAdjust="spacingAndGlyphs">OSC</text><text x="397" y="191.5" font-family="Liberation Sans" font-size="4.5" fill="#e8b8d0" textLength="9" lengthAdjust="spacingAndGlyphs">IC3</text><text x="209" y="290.5" font-family="Liberation Sans" font-size="4.5" fill="#e8b8d0" textLength="10" lengthAdjust="spacingAndGlyphs">MIC</text><text x="259" y="282" font-family="Liberation Sans" font-size="4.5" fill="#e8b8d0" textLength="8" lengthAdjust="spacingAndGlyphs">JP1</text><text x="237" y="277" font-family="Liberation Sans" font-size="4.5" fill="#e8b8d0" textLength="6" lengthAdjust="spacingAndGlyphs">R3</text><text x="217.5" y="118.6" font-family="Liberation Sans" font-size="8" fill="#f0c8e0" textLength="84" lengthAdjust="spacingAndGlyphs">Speech-compressor</text><text x="314.7" y="289.5" font-family="Liberation Sans" font-style="italic" font-size="5" fill="#ecc4dc" textLength="54">RADIO KITS IN JA</text><text x="378.5" y="289.5" font-family="Liberation Sans" font-style="italic" font-size="5" fill="#ecc4dc" textLength="14">OUT</text><text x="281" y="289" font-family="Liberation Sans" font-style="italic" font-size="5" fill="#ecc4dc" textLength="15">JITTER</text><path d="M194.4 107.6H486.9M194.4 107.6V342.6M188.9 295.4H486.9M428.4 107.6V342.6M480.3 107.6V295.4M194.4 336.7H428.4" stroke="#b4b4b4" stroke-width="0.9" fill="none"/><g fill="none" stroke="#b8b8b8" stroke-width="1.15" stroke-linecap="round"><g transform="translate(283.9,316.3)"><path transform="translate(0,0)" d="M0.3 0.4H10C6.3 4.5 3.8 9.5 3.2 15"/><path transform="translate(12.3,0)" d="M9.6 0.4H1.9L1.1 7.2C2.1 6.1 3.6 5.5 5.2 5.5C8.2 5.5 10.1 7.6 10.1 10.3C10.1 13.2 8 15 5.1 15C2.6 15 0.9 13.7 0.4 11.7"/><circle cx="26.20" cy="14.4" r="0.6" fill="#b8b8b8" stroke="none"/><path transform="translate(30.5,0)" d="M5.1 7C2.8 7 1.1 5.7 1.1 3.7C1.1 1.7 2.8 0.3 5.1 0.3C7.4 0.3 9.1 1.7 9.1 3.7C9.1 5.7 7.4 7 5.1 7C2.3 7 0.4 8.6 0.4 11C0.4 13.4 2.3 15 5.1 15C7.9 15 9.8 13.4 9.8 11C9.8 8.6 7.9 7 5.1 7Z"/><path transform="translate(43.5,0)" d="M0.3 0.4H10C6.3 4.5 3.8 9.5 3.2 15"/></g><g transform="translate(459.8,230) rotate(-90)"><path transform="translate(0,0)" d="M9.6 3.6C9.1 1.5 7.5 0.2 5.3 0.2C2.1 0.2 0.4 3.2 0.4 8C0.4 12.6 2.2 15 5.3 15C8.1 15 10 13 10 10.1C10 7.2 8.1 5.3 5.4 5.3C3.1 5.3 1.2 6.6 0.5 8.6"/><path transform="translate(13.6,0)" d="M5.1 0.2C1.9 0.2 0.3 3.1 0.3 7.6C0.3 12.1 1.9 15 5.1 15C8.3 15 9.9 12.1 9.9 7.6C9.9 3.1 8.3 0.2 5.1 0.2Z"/><circle cx="27.40" cy="14.4" r="0.6" fill="#b8b8b8" stroke="none"/><path transform="translate(30,0)" d="M0.6 11.6C1.1 13.7 2.7 15 4.9 15C8.1 15 9.8 12 9.8 7.2C9.8 2.6 8 0.2 4.9 0.2C2.1 0.2 0.2 2.2 0.2 5.1C0.2 8 2.1 9.9 4.8 9.9C7.1 9.9 9 8.6 9.7 6.6"/><path transform="translate(43.8,0)" d="M9.6 0.4H1.9L1.1 7.2C2.1 6.1 3.6 5.5 5.2 5.5C8.2 5.5 10.1 7.6 10.1 10.3C10.1 13.2 8 15 5.1 15C2.6 15 0.9 13.7 0.4 11.7"/></g></g><path d="M480.3 108.5L479.2 115H481.4Z M480.3 294.8L479.2 288.3H481.4Z M195 336.7L201.5 335.6V337.8Z M428 336.7L421.5 335.6V337.8Z" fill="#c0c0c0"/></svg>
<div class="a" style="left:711px;top:61.8px;width:8.5px;height:304.5px;background:#e6e4de;"></div>
<div class="a rs" style="left:711px;top:62px;width:8px;height:8.3px"></div>
<svg style="left:711px;top:62px" width="8" height="8.3" viewBox="0 0 8 8.3"><path d="M1.8 5h4.4l-2.2-2.4z" fill="#000"/></svg>
<div class="a rs" style="left:711px;top:358px;width:8px;height:8.3px"></div>
<svg style="left:711px;top:358px" width="8" height="8.3" viewBox="0 0 8 8.3"><path d="M1.8 3.2h4.4l-2.2 2.4z" fill="#000"/></svg>
<div class="a rs" style="left:711px;top:73px;width:8.5px;height:275.5px"></div>
<div class="a" style="left:28px;top:366.3px;width:683px;height:8px;background:#e6e4de;"></div>
<div class="a rs" style="left:28px;top:366.3px;width:9px;height:8px"></div>
<svg style="left:28px;top:366.3px" width="9" height="8" viewBox="0 0 9 8"><path d="M5.5 1.8v4.4l-2.4-2.2z" fill="#000"/></svg>
<div class="a rs" style="left:38px;top:366.3px;width:643px;height:8px"></div>
<div class="a rs" style="left:702px;top:366.3px;width:9px;height:8px"></div>
<svg style="left:702px;top:366.3px" width="9" height="8" viewBox="0 0 9 8"><path d="M3.5 1.8v4.4l2.4-2.2z" fill="#000"/></svg>
<div class="a" style="left:711px;top:366.3px;width:9px;height:8px;background:#d4d0c8;"></div>
<div class="a" style="left:0px;top:374.3px;width:720px;height:0.9px;background:#808080;"></div>
<div class="a sk" style="left:0.8px;top:376.3px;width:685.2px;height:12px"></div>
<svg style="left:5px;top:379.7px" width="5.4" height="5.4" viewBox="0 0 5.4 5.4"><path d="M2.7 0.1L5.2 2.7L2.7 5.3L0.2 2.7Z" fill="#000"/></svg>
<div class="t" style="left:12.80px;top:378.64px;font-size:7.4px;line-height:7.4px;color:#101010;font-weight:normal;transform:scaleX(0.914);">Left-click to select object to move (Ctrl+right-click to move group)</div>
<div class="a sk" style="left:686.5px;top:376px;width:10px;height:12.3px"></div>
<div class="a sk" style="left:697px;top:376px;width:12px;height:12.3px"></div>
<svg style="left:699px;top:377px" width="9" height="10" viewBox="0 0 9 10"><path d="M5.5 0.5L1.5 5.5H4.5L3 9.5L8 4H5Z" fill="#50c030"/></svg>
<div class="a rs" style="left:588.75px;top:373.8px;width:96.5px;height:14.6px"></div>
<svg style="left:590px;top:374.5px" width="95" height="13" viewBox="0 0 95 13"><path d="M2.5 2V11" stroke="#404040" stroke-width="1"/><circle cx="2.5" cy="2" r="0.8" fill="#c02040"/><text x="7" y="10.5" font-family="Liberation Sans" font-size="9" fill="#303030">.A</text><g fill="none" stroke="#303030" stroke-width="0.8"><path d="M19 3L20 1.5H22.5V10M20 3.5V10L19 11M20 5.5H22.5M20 7.5H22.5M23.5 2H26.5V4.5L27.5 5M23.5 6H27L24 11M24.5 6.5L27.5 11"/></g><circle cx="33" cy="6.5" r="3.5" fill="#e0c020"/><circle cx="34.5" cy="5" r="2" fill="#3070c0"/><rect x="43" y="2.5" width="8" height="8" fill="#208080"/><path d="M45 9L51 3" stroke="#c03030" stroke-width="1.3"/><rect x="55" y="2.5" width="8" height="8" fill="#a0a0b0" stroke="#303040" stroke-width="0.8"/><rect x="61" y="8.5" width="2" height="2" fill="#2040c0"/><path d="M68 4C68 1.5 74 1.5 74 4C74 6 71 6 71 8" stroke="#e0c010" stroke-width="2" fill="none"/><rect x="71" y="6.5" width="4" height="4" fill="#803040"/><text x="79" y="6" font-family="Liberation Sans" font-size="3.6" fill="#404040">CARE</text><text x="79" y="10.5" font-family="Liberation Sans" font-size="3.6" fill="#404040">KANA</text></svg>
<div class="a" style="left:0px;top:389.3px;width:720px;height:15.7px;background:#d4d0c8;"></div>
<div class="a" style="left:0px;top:389.3px;width:720px;height:0.9px;background:#fff;"></div>
<div class="a rs" style="left:1.4px;top:392.2px;width:36.2px;height:11.3px;border-right-color:#202020;border-bottom-color:#202020"></div>
<svg style="left:2.8px;top:392.8px" width="10" height="10" viewBox="0 0 10 10"><path d="M1 2L4.5 1.5V5H1Z" fill="#e04020"/><path d="M5 1.4L9 0.8V4.9H5Z" fill="#30a030"/><path d="M1 5.5H4.5V9L1 8.5Z" fill="#2060d0"/><path d="M5 5.5H9V9.6L5 9.1Z" fill="#f0c010"/><rect x="0" y="1" width="1" height="8" fill="#202020"/></svg>
<svg style="left:13.4px;top:394.2px" width="22" height="7" viewBox="0 0 22 7"><g fill="none" stroke="#101010" stroke-width="1.1"><path d="M0.8 1H4.3C3.8 3.5 2.5 5.5 0.5 6.8M2.8 3.8L4.8 6.5"/><path d="M7.8 0.3L6.2 2.8M7.3 1.2H10.5C10 4 8.5 5.8 6.5 6.8M7.5 3.3L9.5 4.3"/><path d="M12 3.6H16.2"/><path d="M18.5 0.2V6.8M18.8 2.8L21 4.2"/></g></svg>
<div class="a" style="left:40.3px;top:391.5px;width:1px;height:12px;background:#fff;"></div>
<div class="a" style="left:41.3px;top:391.5px;width:1.2px;height:12px;background:#e8e6e2;"></div>
<div class="a" style="left:42.5px;top:391.5px;width:1px;height:12px;background:#808080;"></div>
<svg style="left:46.5px;top:392.5px" width="10" height="10" viewBox="0 0 10 10"><circle cx="4.5" cy="4.8" r="3.8" fill="#3aa0e8"/><path d="M1.5 4.5H7.5" stroke="#fff" stroke-width="1.2"/><path d="M0.5 7C3 1 8 0.5 9 1.5" stroke="#1060b0" stroke-width="0.8" fill="none"/></svg>
<svg style="left:59.8px;top:392.5px" width="10" height="10" viewBox="0 0 10 10"><rect x="0.5" y="2" width="8" height="6" fill="#e8f0f8" stroke="#5080c0" stroke-width="0.8"/><circle cx="4.5" cy="5" r="2.3" fill="#40a0e0"/><path d="M0.5 2L4.5 5L8.5 2" stroke="#3070c0" stroke-width="0.7" fill="none"/></svg>
<svg style="left:72.2px;top:392.5px" width="10" height="10" viewBox="0 0 10 10"><rect x="0.5" y="1.5" width="8" height="7.5" fill="#f0e8b0" stroke="#606060" stroke-width="0.7"/><path d="M2 8L7.5 1" stroke="#3060c0" stroke-width="1.3"/><rect x="1.5" y="4" width="3" height="3" fill="#e0c040"/></svg>
<svg style="left:85.2px;top:392.5px" width="10" height="10" viewBox="0 0 10 10"><rect x="0.5" y="0.5" width="8.5" height="8.5" fill="#c0c8d8" stroke="#607090" stroke-width="0.8"/><circle cx="4.7" cy="4.7" r="2.3" fill="none" stroke="#3070c0" stroke-width="1"/></svg>
<svg style="left:97.7px;top:392.5px" width="10" height="10" viewBox="0 0 10 10"><circle cx="4.7" cy="4.7" r="4" fill="#f8f8f8" stroke="#e0a010" stroke-width="1.6"/><circle cx="4.7" cy="4.7" r="1.4" fill="#d02020"/><path d="M1 3A4 4 0 0 1 4 0.8" stroke="#3080e0" stroke-width="1.6" fill="none"/></svg>
<svg style="left:111.9px;top:392.5px" width="10" height="10" viewBox="0 0 10 10"><rect x="1" y="1" width="8" height="7.5" fill="#f0f0f8" stroke="#8090a8" stroke-width="0.7"/><rect x="1" y="1" width="8" height="2" fill="#3060c0"/><path d="M0 8L3 9" stroke="#d04020" stroke-width="1"/></svg>
<svg style="left:124.2px;top:392.5px" width="10" height="10" viewBox="0 0 10 10"><rect x="0.5" y="0.5" width="8.5" height="6.5" fill="#40a0e0" stroke="#404850" stroke-width="0.9"/><rect x="1.5" y="7.5" width="6.5" height="2" fill="#707070"/></svg>
<svg style="left:137.7px;top:392.5px" width="10" height="10" viewBox="0 0 10 10"><circle cx="4.8" cy="4.8" r="4.3" fill="#e86010"/><circle cx="5.5" cy="4.3" r="2.5" fill="#3a5aa8"/><path d="M1 3C2 6 5 8 8.5 6" stroke="#f8a020" stroke-width="1.5" fill="none"/></svg>
<svg style="left:150.2px;top:392.5px" width="10" height="10" viewBox="0 0 10 10"><circle cx="5" cy="5" r="4" fill="#e8eef8" stroke="#5070a0" stroke-width="0.9"/><path d="M2 8L5 4.5L7.5 2" stroke="#3060b0" stroke-width="1.1" fill="none"/></svg>
<svg style="left:163.5px;top:392.5px" width="10" height="10" viewBox="0 0 10 10"><rect x="0.5" y="0.5" width="8.5" height="8.5" fill="#e0f0e0" stroke="#208030" stroke-width="1"/><path d="M2.5 2.5L7 7M7 2.5L2.5 7" stroke="#208030" stroke-width="1.3"/></svg>
<svg style="left:176.0px;top:392.5px" width="10" height="10" viewBox="0 0 10 10"><rect x="0.5" y="2" width="8.5" height="6.5" fill="#f0f0f8" stroke="#606878" stroke-width="0.7"/><rect x="0.5" y="2" width="8.5" height="1.8" fill="#3868b8"/><circle cx="1.5" cy="1.5" r="1.2" fill="#30c040"/><rect x="5" y="5" width="3" height="2" fill="#d04040"/></svg>
<svg style="left:189.2px;top:392.5px" width="10" height="10" viewBox="0 0 10 10"><rect x="0.5" y="0.5" width="8.5" height="8.5" fill="#2040a0" stroke="#101850" stroke-width="0.8"/><path d="M1.8 2.5L3.2 7.5L4.7 4L6.2 7.5L7.7 2.5" stroke="#fff" stroke-width="0.9" fill="none"/></svg>
<svg style="left:201.89999999999998px;top:392.5px" width="10" height="10" viewBox="0 0 10 10"><path d="M1 1.5L6 0.5V9L1 9.5Z" fill="#2050c0"/><rect x="5" y="3" width="4" height="6" fill="#3c6cd0"/><path d="M2.5 2.5V8" stroke="#80a0e0" stroke-width="0.6"/></svg>
<div class="a" style="left:290.3px;top:391.5px;width:1px;height:12px;background:#fff;"></div>
<div class="a" style="left:291.3px;top:391.5px;width:1.2px;height:12px;background:#e8e6e2;"></div>
<div class="a" style="left:292.5px;top:391.5px;width:1px;height:12px;background:#808080;"></div>
<div class="a rs" style="left:295px;top:392px;width:64.0px;height:11.5px;border-right-color:#202020;border-bottom-color:#202020"></div>
<svg style="left:297.5px;top:393px" width="10" height="10" viewBox="0 0 10 10"><rect x="0.5" y="1" width="7.5" height="7" fill="#f0e080" stroke="#808060" stroke-width="0.6"/><circle cx="5" cy="5" r="2.5" fill="none" stroke="#2060c0" stroke-width="1.1"/><path d="M6.8 6.8L9 9" stroke="#2060c0" stroke-width="1.3"/></svg>
<div class="t" style="left:307.00px;top:393.97px;font-size:7.6px;line-height:7.6px;color:#000;font-weight:normal;transform:scaleX(0.790);">MIC-COMP(ca3...</div>
<div class="a rs" style="left:361px;top:392px;width:63.4px;height:11.5px;border-right-color:#202020;border-bottom-color:#202020"></div>
<svg style="left:363.5px;top:393px" width="10" height="10" viewBox="0 0 10 10"><path d="M1 8C0 4 3 0.5 8 1C6 2 5 3 5.5 4.5C6.5 4 8 4.5 8.5 5.5C6 5.5 5 7 5 9Z" fill="#e02020"/></svg>
<div class="t" style="left:373.00px;top:393.97px;font-size:7.6px;line-height:7.6px;color:#000;font-weight:normal;transform:scaleX(0.846);">Control Panel - ...</div>
<div class="a rs" style="left:427.8px;top:392px;width:63.2px;height:11.5px;border-right-color:#202020;border-bottom-color:#202020"></div>
<svg style="left:430.3px;top:393px" width="10" height="10" viewBox="0 0 10 10"><rect x="0" y="1.5" width="9" height="6.5" fill="#c0b0b0"/><text x="0.3" y="6.4" font-family="Liberation Sans" font-size="4.2" font-weight="bold" fill="#c02020">SCH</text></svg>
<div class="t" style="left:439.80px;top:393.97px;font-size:7.6px;line-height:7.6px;color:#000;font-weight:normal;transform:scaleX(0.856);">comp-ara.sch</div>
<div class="a" style="left:493.3px;top:392px;width:64.5px;height:11.5px;background:#e8e6e2;border-top:1px solid #404040;border-left:1px solid #404040;border-bottom:1px solid #fff;border-right:1px solid #fff"></div>
<svg style="left:495.8px;top:393px" width="10" height="10" viewBox="0 0 10 10"><rect x="0.5" y="1" width="8.5" height="7" fill="#70b060" stroke="#909090" stroke-width="0.6"/></svg>
<div class="t" style="left:505.30px;top:393.97px;font-size:7.6px;line-height:7.6px;color:#000;font-weight:bold;transform:scaleX(0.968);">1 Board - D:...</div>
<div class="a rs" style="left:560px;top:392px;width:64.4px;height:11.5px;border-right-color:#202020;border-bottom-color:#202020"></div>
<svg style="left:562.5px;top:393px" width="10" height="10" viewBox="0 0 10 10"><rect x="0.5" y="0.5" width="6" height="6" fill="#f0f0f0" stroke="#303040" stroke-width="0.9"/><path d="M3.5 1.5V4.5" stroke="#2050a0" stroke-width="1.2"/><rect x="0" y="7" width="9" height="2.3" fill="#404850"/></svg>
<div class="t" style="left:572.00px;top:393.97px;font-size:7.6px;line-height:7.6px;color:#000;font-weight:normal;transform:scaleX(0.791);">EPSON PX-045...</div>
<div class="a sk" style="left:630px;top:392px;width:90px;height:13px"></div>
<svg style="left:632.0px;top:393px" width="10" height="10" viewBox="0 0 10 10"><circle cx="4.5" cy="5" r="3.8" fill="#fff" stroke="#e02020" stroke-width="1.1"/><path d="M2 7.5L7 2.5" stroke="#e02020" stroke-width="1.1"/><path d="M3 6L5 3" stroke="#e0a020" stroke-width="1.3"/></svg>
<svg style="left:642.0px;top:393px" width="10" height="10" viewBox="0 0 10 10"><path d="M1 1H8V5.5C8 8 4.5 9.5 4.5 9.5C4.5 9.5 1 8 1 5.5Z" fill="#303050"/><path d="M3 3.5H6V6H3Z" fill="#e0c020"/></svg>
<svg style="left:652.0px;top:393px" width="10" height="10" viewBox="0 0 10 10"><ellipse cx="4.8" cy="4.8" rx="4.3" ry="3.5" fill="#2050d0"/><rect x="3.8" y="2.5" width="2" height="4.5" fill="#fff"/></svg>
<svg style="left:663.0999999999999px;top:393px" width="10" height="10" viewBox="0 0 10 10"><path d="M1 6L6 1L9 4L4 9Z" fill="#e8e8e8" stroke="#505050" stroke-width="0.7"/><path d="M0.5 9L5 6" stroke="#30a030" stroke-width="1.2"/></svg>
<svg style="left:673.0999999999999px;top:393px" width="10" height="10" viewBox="0 0 10 10"><rect x="3" y="1" width="6" height="6" fill="#f0f0f8" stroke="#2040a0" stroke-width="0.9"/><rect x="1" y="4" width="3" height="5" fill="#fff" stroke="#303030" stroke-width="0.8"/></svg>
<svg style="left:683.0999999999999px;top:393px" width="10" height="10" viewBox="0 0 10 10"><path d="M1 4L6 1L9 3V7L4 9.5L1 8Z" fill="#d8d8d8" stroke="#707070" stroke-width="0.7"/><rect x="3" y="5" width="4" height="2" fill="#a0a0a0"/></svg>
<div class="t" style="left:697.80px;top:394.53px;font-size:8px;line-height:8px;color:#101010;font-weight:normal;transform:scaleX(0.774);">15:29</div>
</body></html>
